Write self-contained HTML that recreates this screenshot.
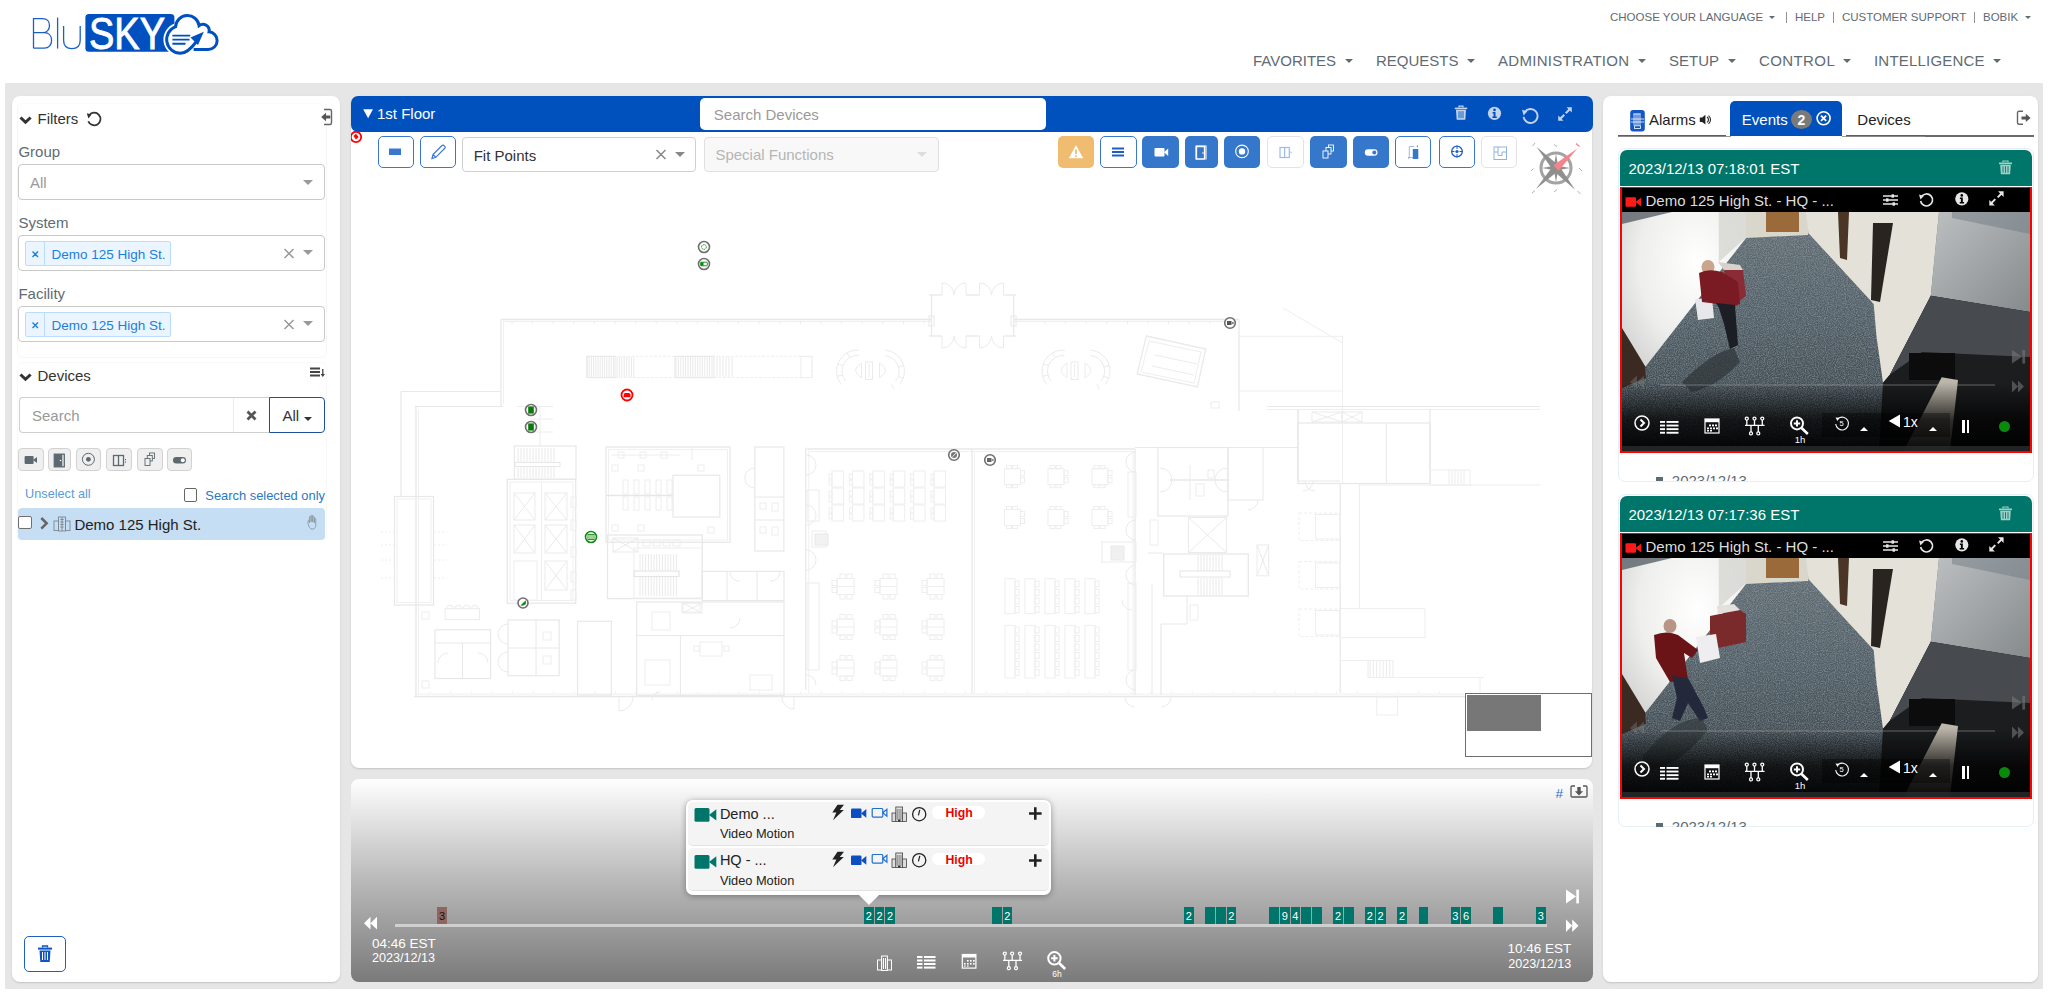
<!DOCTYPE html>
<html><head><meta charset="utf-8">
<style>
*{box-sizing:border-box;margin:0;padding:0}
html,body{width:2048px;height:994px;overflow:hidden;background:#fff;font-family:"Liberation Sans",sans-serif;position:relative;color:#333}
.a{position:absolute;white-space:nowrap}
svg.a{overflow:visible}
</style></head><body>

<svg class="a" style="left:0;top:0" width="230" height="60" viewBox="0 0 230 60">
 <g fill="none" stroke="#1b5fc6" stroke-width="1.3">
  <path d="M33.5 48.2V18.6h9.2c4.2 0 6.8 2.9 6.8 6.9s-2.6 7.2-6.8 7.2h-9.2 M42.7 32.7h1.6c4.6 0 7.3 3.2 7.3 7.6s-2.7 7.9-7.3 7.9h-10.8"/>
  <path d="M57.6 17.6v31"/>
  <path d="M63.6 26v14.3c0 5.3 3.1 8.3 8.3 8.3s8.3-3 8.3-8.3V26"/>
 </g>
 <rect x="85.4" y="14" width="89" height="37.7" rx="3.5" fill="#0050c0"/>
 <text x="89" y="49.2" font-family="Liberation Sans" font-size="45" fill="#fff" stroke="#fff" stroke-width="0.9" textLength="76" lengthAdjust="spacingAndGlyphs">SKY</text>
 <path d="M175.6 26.6A13.8 13.8 0 0 0 178 53.1" fill="none" stroke="#fff" stroke-width="6.5"/>
 <circle cx="180.5" cy="39.5" r="12.5" fill="#fff"/>
 <g fill="none" stroke="#0050c0" stroke-width="3">
  <path d="M193.6 49.4H208.3A8.8 8.8 0 0 0 209.05 31.83A6.2 6.2 0 0 0 199.09 25.69A11.8 11.8 0 0 0 175.62 26.59A13.8 13.8 0 0 0 180.5 53.3C186.5 53.3 192 47.5 196.5 41.5"/>
 </g>
 <path d="M203.8 31.7L190.5 37.5L198 44.9z" fill="#0050c0"/>
 <g stroke="#0050c0" stroke-width="1.9"><path d="M172.4 35.6H190.2M172.4 39.6H189.5M172.4 43.7H185.5"/></g>
</svg>
<div class="a" style="left:1610px;top:10.23px;font-size:11.5px;line-height:14.38px;color:#5f6b73;font-weight:400;">CHOOSE YOUR LANGUAGE</div>
<div class="a" style="left:1769px;top:16px;width:0;height:0;border-left:3.5px solid transparent;border-right:3.5px solid transparent;border-top:3.5px solid #5f6b73"></div>
<div class="a" style="left:1785.5px;top:12px;width:1px;height:11px;background:#8a9399"></div>
<div class="a" style="left:1795px;top:10.23px;font-size:11.5px;line-height:14.38px;color:#5f6b73;font-weight:400;">HELP</div>
<div class="a" style="left:1833px;top:12px;width:1px;height:11px;background:#8a9399"></div>
<div class="a" style="left:1842px;top:10.23px;font-size:11.5px;line-height:14.38px;color:#5f6b73;font-weight:400;">CUSTOMER SUPPORT</div>
<div class="a" style="left:1974px;top:12px;width:1px;height:11px;background:#8a9399"></div>
<div class="a" style="left:1983px;top:10.23px;font-size:11.5px;line-height:14.38px;color:#5f6b73;font-weight:400;">BOBIK</div>
<div class="a" style="left:2025px;top:16px;width:0;height:0;border-left:3.5px solid transparent;border-right:3.5px solid transparent;border-top:3.5px solid #5f6b73"></div>
<div class="a" style="left:1253px;top:52.13px;font-size:15px;line-height:18.75px;color:#5f6b73;font-weight:400;letter-spacing:0px">FAVORITES</div>
<div class="a" style="left:1345px;top:59px;width:0;height:0;border-left:4.0px solid transparent;border-right:4.0px solid transparent;border-top:4px solid #5f6b73"></div>
<div class="a" style="left:1376px;top:52.13px;font-size:15px;line-height:18.75px;color:#5f6b73;font-weight:400;letter-spacing:0px">REQUESTS</div>
<div class="a" style="left:1467px;top:59px;width:0;height:0;border-left:4.0px solid transparent;border-right:4.0px solid transparent;border-top:4px solid #5f6b73"></div>
<div class="a" style="left:1498px;top:52.13px;font-size:15px;line-height:18.75px;color:#5f6b73;font-weight:400;letter-spacing:0.3px">ADMINISTRATION</div>
<div class="a" style="left:1638px;top:59px;width:0;height:0;border-left:4.0px solid transparent;border-right:4.0px solid transparent;border-top:4px solid #5f6b73"></div>
<div class="a" style="left:1669px;top:52.13px;font-size:15px;line-height:18.75px;color:#5f6b73;font-weight:400;letter-spacing:0px">SETUP</div>
<div class="a" style="left:1728px;top:59px;width:0;height:0;border-left:4.0px solid transparent;border-right:4.0px solid transparent;border-top:4px solid #5f6b73"></div>
<div class="a" style="left:1759px;top:52.13px;font-size:15px;line-height:18.75px;color:#5f6b73;font-weight:400;letter-spacing:0.4px">CONTROL</div>
<div class="a" style="left:1843px;top:59px;width:0;height:0;border-left:4.0px solid transparent;border-right:4.0px solid transparent;border-top:4px solid #5f6b73"></div>
<div class="a" style="left:1874px;top:52.13px;font-size:15px;line-height:18.75px;color:#5f6b73;font-weight:400;letter-spacing:0.2px">INTELLIGENCE</div>
<div class="a" style="left:1993px;top:59px;width:0;height:0;border-left:4.0px solid transparent;border-right:4.0px solid transparent;border-top:4px solid #5f6b73"></div>
<div class="a" style="left:5px;top:83px;width:2038px;height:906px;background:#e6e6e6"></div>
<div class="a" style="left:12px;top:96px;width:328px;height:886px;background:#fff;border-radius:8px;box-shadow:0 1px 2px rgba(0,0,0,.15)"></div>
<div class="a" style="left:351px;top:96px;width:1241px;height:672px;background:#fff;border-radius:8px;box-shadow:0 1px 2px rgba(0,0,0,.15)"></div>
<div class="a" style="left:351px;top:779px;width:1241.5px;height:202.5px;border-radius:8px;background:linear-gradient(#fff 0%,#f6f6f6 6%,#b9b9b9 50%,#7a7a7a 100%)"></div>
<div class="a" style="left:1603px;top:96px;width:435px;height:886px;background:#fff;border-radius:8px;box-shadow:0 1px 2px rgba(0,0,0,.15)"></div>
<div class="a" style="left:17px;top:103px;width:310px;height:255px;border:1px solid #f6f6f6;border-top-color:#fbfbfb;border-radius:6px"></div>
<div class="a" style="left:17px;top:362px;width:310px;height:180px;border:1px solid #f8f8f8;border-radius:6px;border-bottom:none"></div>
<svg class="a" style="left:17px;top:112px;" width="18" height="14" viewBox="0 0 18 14"><polyline points="3.5,5.5 8.5,10.3 13.6,5.5" fill="none" stroke="#333" stroke-width="3"/></svg>
<div class="a" style="left:37.5px;top:110.03px;font-size:15px;line-height:18.75px;color:#333;font-weight:400;">Filters</div>
<svg class="a" style="left:85px;top:110px;" width="18" height="17" viewBox="0 0 18 17"><path d="M4.2 5.2A6.3 6.3 0 1 1 3.3 11.2" fill="none" stroke="#333" stroke-width="1.8"/><path d="M1.8 3.2L6.6 4.6L3.4 8.6z" fill="#333"/></svg>
<svg class="a" style="left:318px;top:106px;" width="18" height="20" viewBox="0 0 18 20"><path d="M6 3.5h6a1.5 1.5 0 0 1 1.5 1.5v12a1.5 1.5 0 0 1 -1.5 1.5h-6" fill="none" stroke="#666" stroke-width="1.4"/><path d="M3.2 11l4.8-4.2v2.7h4.3v3h-4.3v2.7z" fill="#555"/></svg>
<div class="a" style="left:18.4px;top:143.13px;font-size:15px;line-height:18.75px;color:#5f6b73;font-weight:400;">Group</div>
<div class="a" style="left:18px;top:164px;width:307px;height:36px;border:1px solid #c9c9c9;border-radius:4px;background:#fff"></div>
<div class="a" style="left:30px;top:173.93px;font-size:15px;line-height:18.75px;color:#9a9a9a;font-weight:400;">All</div>
<div class="a" style="left:303px;top:179.5px;width:0;height:0;border-left:5.0px solid transparent;border-right:5.0px solid transparent;border-top:5px solid #999"></div>
<div class="a" style="left:18.4px;top:214.03px;font-size:15px;line-height:18.75px;color:#5f6b73;font-weight:400;">System</div>
<div class="a" style="left:18px;top:235px;width:307px;height:36px;border:1px solid #c9c9c9;border-radius:4px;background:#fff"></div>
<div class="a" style="left:24.6px;top:241.4px;width:146px;height:24.6px;background:#ebf5ff;border:1px solid #b9dcff;border-radius:2px"></div>
<div class="a" style="left:44px;top:241.4px;width:1px;height:24.6px;background:#b9dcff"></div>
<svg class="a" style="left:30.5px;top:249.5px;" width="9" height="9" viewBox="0 0 9 9"><path d="M1.5 1.5L7 7M7 1.5L1.5 7" stroke="#1a7fe0" stroke-width="1.4"/></svg>
<div class="a" style="left:51.4px;top:246.58px;font-size:13.5px;line-height:16.88px;color:#1a7fe0;font-weight:400;">Demo 125 High St.</div>
<svg class="a" style="left:282.5px;top:247.5px;" width="12" height="11" viewBox="0 0 12 11"><path d="M1.5 1L10.5 10M10.5 1L1.5 10" stroke="#999" stroke-width="1.5"/></svg>
<div class="a" style="left:303px;top:250px;width:0;height:0;border-left:5.0px solid transparent;border-right:5.0px solid transparent;border-top:5px solid #999"></div>
<div class="a" style="left:18.4px;top:285.13px;font-size:15px;line-height:18.75px;color:#5f6b73;font-weight:400;">Facility</div>
<div class="a" style="left:18px;top:306px;width:307px;height:36px;border:1px solid #c9c9c9;border-radius:4px;background:#fff"></div>
<div class="a" style="left:24.6px;top:312.4px;width:146px;height:24.6px;background:#ebf5ff;border:1px solid #b9dcff;border-radius:2px"></div>
<div class="a" style="left:44px;top:312.4px;width:1px;height:24.6px;background:#b9dcff"></div>
<svg class="a" style="left:30.5px;top:320.5px;" width="9" height="9" viewBox="0 0 9 9"><path d="M1.5 1.5L7 7M7 1.5L1.5 7" stroke="#1a7fe0" stroke-width="1.4"/></svg>
<div class="a" style="left:51.4px;top:317.58px;font-size:13.5px;line-height:16.88px;color:#1a7fe0;font-weight:400;">Demo 125 High St.</div>
<svg class="a" style="left:282.5px;top:318.5px;" width="12" height="11" viewBox="0 0 12 11"><path d="M1.5 1L10.5 10M10.5 1L1.5 10" stroke="#999" stroke-width="1.5"/></svg>
<div class="a" style="left:303px;top:321px;width:0;height:0;border-left:5.0px solid transparent;border-right:5.0px solid transparent;border-top:5px solid #999"></div>
<svg class="a" style="left:17px;top:370px;" width="18" height="14" viewBox="0 0 18 14"><polyline points="3.5,4.5 8.5,9.3 13.6,4.5" fill="none" stroke="#333" stroke-width="3"/></svg>
<div class="a" style="left:37.5px;top:367.43px;font-size:15px;line-height:18.75px;color:#333;font-weight:400;">Devices</div>
<svg class="a" style="left:309px;top:366px;" width="18" height="13" viewBox="0 0 18 13"><path d="M1 2.5h10M1 6h10M1 9.5h10" stroke="#444" stroke-width="2"/><path d="M13.8 3v6" stroke="#444" stroke-width="1.3"/><path d="M11.6 8l2.2 3l2.2-3z" fill="#444"/></svg>
<div class="a" style="left:18.5px;top:397px;width:251px;height:36px;border:1px solid #cfcfcf;border-right:none;border-radius:4px 0 0 4px;background:#fff"></div>
<div class="a" style="left:233px;top:398px;width:1px;height:34px;background:#ececec"></div>
<div class="a" style="left:32px;top:407.33px;font-size:15px;line-height:18.75px;color:#999;font-weight:400;">Search</div>
<svg class="a" style="left:245px;top:409px;" width="13" height="13" viewBox="0 0 13 13"><path d="M2.5 2.5L10.5 10.5M10.5 2.5L2.5 10.5" stroke="#555" stroke-width="2.8"/></svg>
<div class="a" style="left:269px;top:397px;width:56px;height:36px;border:1px solid #1c4fa0;border-radius:0 4px 4px 0;background:#fff"></div>
<div class="a" style="left:282.4px;top:407.33px;font-size:15px;line-height:18.75px;color:#333;font-weight:400;">All</div>
<div class="a" style="left:303.5px;top:416.5px;width:0;height:0;border-left:4.0px solid transparent;border-right:4.0px solid transparent;border-top:4px solid #333"></div>
<div class="a" style="left:18.2px;top:448.2px;width:25.4px;height:23.3px;background:#efefef;border:1px solid #d2d2d2;border-radius:4px"></div>
<div class="a" style="left:48.2px;top:448.2px;width:22.7px;height:23.3px;background:#efefef;border:1px solid #d2d2d2;border-radius:4px"></div>
<div class="a" style="left:76.2px;top:448.2px;width:24.6px;height:23.3px;background:#efefef;border:1px solid #d2d2d2;border-radius:4px"></div>
<div class="a" style="left:106.1px;top:448.2px;width:26.4px;height:23.3px;background:#efefef;border:1px solid #d2d2d2;border-radius:4px"></div>
<div class="a" style="left:137.3px;top:448.2px;width:25.3px;height:23.3px;background:#efefef;border:1px solid #d2d2d2;border-radius:4px"></div>
<div class="a" style="left:167.2px;top:448.2px;width:25.0px;height:23.3px;background:#efefef;border:1px solid #d2d2d2;border-radius:4px"></div>
<svg class="a" style="left:24px;top:454px;" width="14" height="12" viewBox="0 0 14 12"><rect x="0.6" y="2" width="9" height="8" rx="1" fill="#5d6970"/><path d="M9 6l4-3v6z" fill="#5d6970"/></svg>
<svg class="a" style="left:53px;top:453px;" width="13" height="15" viewBox="0 0 13 15"><rect x="1.3" y="1.2" width="10" height="12.6" fill="none" stroke="#5d6970" stroke-width="1.3"/><rect x="1.3" y="1.2" width="8" height="12.6" fill="#5d6970"/><circle cx="7.5" cy="7.5" r="0.8" fill="#fff"/></svg>
<svg class="a" style="left:81px;top:452px;" width="15" height="15" viewBox="0 0 15 15"><circle cx="7.4" cy="7.3" r="6" fill="none" stroke="#5d6970" stroke-width="1"/><circle cx="7.4" cy="7.3" r="2.4" fill="#5d6970"/></svg>
<svg class="a" style="left:112px;top:454px;" width="16" height="13" viewBox="0 0 16 13"><rect x="1.5" y="1.5" width="10" height="10" fill="none" stroke="#5d6970" stroke-width="1.3"/><path d="M6.5 1.5v10" stroke="#5d6970" stroke-width="1.3"/><path d="M13.5 5v1.2M13.5 7.5v1.2" stroke="#5d6970" stroke-width="1"/></svg>
<svg class="a" style="left:144px;top:452px;" width="12" height="15" viewBox="0 0 12 15"><g fill="#efefef" stroke="#5d6970" stroke-width="0.9"><rect x="5.5" y="1" width="5" height="5.5"/><rect x="3.3" y="3.5" width="5" height="5.5"/><rect x="1" y="6.5" width="5" height="7"/></g></svg>
<svg class="a" style="left:172px;top:456px;" width="15" height="9" viewBox="0 0 15 9"><rect x="1" y="1" width="13" height="6.5" rx="3.25" fill="#5d6970"/><circle cx="10.8" cy="4.25" r="2" fill="#fff"/></svg>
<div class="a" style="left:25.1px;top:486.96px;font-size:12.7px;line-height:15.88px;color:#5b9bd5;font-weight:400;">Unselect all</div>
<div class="a" style="left:183.5px;top:488.4px;width:13.4px;height:13.2px;border:1px solid #666;border-radius:2px;background:#fff"></div>
<div class="a" style="left:205.3px;top:487.77px;font-size:12.9px;line-height:16.12px;color:#2a77c6;font-weight:400;">Search selected only</div>
<div class="a" style="left:18.1px;top:508.1px;width:307px;height:31.5px;background:#c5def3;border-radius:4px"></div>
<div class="a" style="left:18.2px;top:516px;width:13.7px;height:13px;border:1px solid #6f6f6f;border-radius:2px;background:#fff"></div>
<svg class="a" style="left:38px;top:515px;" width="13" height="16" viewBox="0 0 13 16"><polyline points="3.3,3 8.6,8.3 3.3,13.6" fill="none" stroke="#666" stroke-width="2.6"/></svg>
<svg class="a" style="left:53px;top:516px;" width="18" height="16" viewBox="0 0 18 16"><g fill="none" stroke="#7a8790" stroke-width="0.9"><rect x="5.5" y="1" width="7" height="14"/><rect x="1" y="5" width="4.5" height="9.5"/><rect x="12.5" y="5" width="4.5" height="9.5"/><path d="M7.3 3.5h3.4M7.3 6h3.4M7.3 8.5h3.4M7.3 11h3.4M9 1v14"/></g></svg>
<div class="a" style="left:74.4px;top:515.73px;font-size:15px;line-height:18.75px;color:#222;font-weight:400;">Demo 125 High St.</div>
<svg class="a" style="left:307px;top:514px;" width="15" height="18" viewBox="0 0 15 18"><path d="M4 15c-2-2-3-4-3-6V7c0-1 1.5-1 1.5 0v2V3c0-1 1.6-1 1.6 0v5V2c0-1 1.6-1 1.6 0v6V3c0-1 1.6-1 1.6 0v6V5c0-1 1.5-1 1.5 0v6c0 2-1 4-2.5 4z" fill="none" stroke="#8d979e" stroke-width="0.9"/></svg>
<div class="a" style="left:23.6px;top:936.3px;width:42.2px;height:36.2px;border:1.5px solid #1f5fc4;border-radius:5px;background:#fff"></div>
<svg class="a" style="left:37px;top:945px;" width="16" height="18" viewBox="0 0 16 18"><path d="M5.5 2.5V1h5v1.5" fill="none" stroke="#0d54c4" stroke-width="1.3"/><rect x="1" y="2.6" width="14" height="2" fill="#0d54c4"/><path d="M2.5 5.5h11l-0.8 11.5h-9.4z" fill="#0d54c4"/><path d="M5.5 7v8M8 7v8M10.5 7v8" stroke="#fff" stroke-width="1"/></svg>
<div class="a" style="left:351px;top:96px;width:1241.5px;height:35.8px;background:#0051be;border-radius:7px"></div>
<svg class="a" style="left:362px;top:108px;" width="12" height="11" viewBox="0 0 12 11"><path d="M1.2 1.2H11L6.1 10.2z" fill="#fff"/></svg>
<div class="a" style="left:377px;top:105.13px;font-size:15px;line-height:18.75px;color:#fff;font-weight:400;">1st Floor</div>
<div class="a" style="left:700px;top:98px;width:345.5px;height:31.5px;background:#fff;border-radius:5px"></div>
<div class="a" style="left:713.8px;top:105.93px;font-size:15px;line-height:18.75px;color:#9a9a9a;font-weight:400;">Search Devices</div>
<svg class="a" style="left:1453px;top:105px;" width="16" height="16" viewBox="0 0 16 16"><path d="M6 2.4V1.2h4v1.2" fill="none" stroke="#c3d3ec" stroke-width="1.2"/><rect x="1.8" y="2.6" width="12.4" height="1.6" fill="#c3d3ec"/><path d="M3 4.8h10l-0.7 10h-8.6z" fill="#c3d3ec"/><path d="M6 6.2v7M8 6.2v7M10 6.2v7" stroke="#0051be" stroke-width="0.9"/></svg>
<svg class="a" style="left:1487px;top:106px;" width="16" height="16" viewBox="0 0 16 16"><circle cx="7.5" cy="7.3" r="6.6" fill="#c3d3ec"/><circle cx="7.5" cy="3.9" r="1.3" fill="#0051be"/><path d="M5.6 6h2.9v4.6h1.3v1.4h-4.4v-1.4h1.2v-3.2h-1z" fill="#0051be"/></svg>
<svg class="a" style="left:1521px;top:106px;" width="18" height="18" viewBox="0 0 18 18"><path d="M3.6 6.3A7 7 0 1 1 2.6 10.8" fill="none" stroke="#c3d3ec" stroke-width="1.9"/><path d="M1 3.8L6.4 5.3L2.6 9.4z" fill="#c3d3ec"/></svg>
<svg class="a" style="left:1557px;top:106px;" width="16" height="16" viewBox="0 0 16 16"><path d="M3 13l4.3-4.3M8.7 7.3L13 3" stroke="#c3d3ec" stroke-width="2"/><path d="M1.2 9.5V14.8H6.5z M9.5 1.2H14.8V6.5z" fill="#c3d3ec"/></svg>
<svg class="a" style="left:351px;top:132px" width="1241" height="636" viewBox="351 132 1241 636"><g><path d="M501 319.5 L931 319.5" stroke="#e8e8e8" stroke-width="1.3" fill="none"/><path d="M503 321.5 L931 321.5" stroke="#f0f0f0" stroke-width="1" fill="none"/><path d="M1014 319.5 L1239 319.5" stroke="#e8e8e8" stroke-width="1.3" fill="none"/><path d="M1014 321.5 L1237 321.5" stroke="#f0f0f0" stroke-width="1" fill="none"/><path d="M512.0 321 L512.0 324" stroke="#ececec" stroke-width="1" fill="none"/><path d="M532.6 321 L532.6 324" stroke="#ececec" stroke-width="1" fill="none"/><path d="M553.2 321 L553.2 324" stroke="#ececec" stroke-width="1" fill="none"/><path d="M573.8 321 L573.8 324" stroke="#ececec" stroke-width="1" fill="none"/><path d="M594.4 321 L594.4 324" stroke="#ececec" stroke-width="1" fill="none"/><path d="M615.0 321 L615.0 324" stroke="#ececec" stroke-width="1" fill="none"/><path d="M635.6 321 L635.6 324" stroke="#ececec" stroke-width="1" fill="none"/><path d="M656.2 321 L656.2 324" stroke="#ececec" stroke-width="1" fill="none"/><path d="M676.8 321 L676.8 324" stroke="#ececec" stroke-width="1" fill="none"/><path d="M697.4 321 L697.4 324" stroke="#ececec" stroke-width="1" fill="none"/><path d="M718.0 321 L718.0 324" stroke="#ececec" stroke-width="1" fill="none"/><path d="M738.6 321 L738.6 324" stroke="#ececec" stroke-width="1" fill="none"/><path d="M759.2 321 L759.2 324" stroke="#ececec" stroke-width="1" fill="none"/><path d="M779.8 321 L779.8 324" stroke="#ececec" stroke-width="1" fill="none"/><path d="M800.4000000000001 321 L800.4000000000001 324" stroke="#ececec" stroke-width="1" fill="none"/><path d="M821.0 321 L821.0 324" stroke="#ececec" stroke-width="1" fill="none"/><path d="M841.6 321 L841.6 324" stroke="#ececec" stroke-width="1" fill="none"/><path d="M862.2 321 L862.2 324" stroke="#ececec" stroke-width="1" fill="none"/><path d="M882.8 321 L882.8 324" stroke="#ececec" stroke-width="1" fill="none"/><path d="M903.4000000000001 321 L903.4000000000001 324" stroke="#ececec" stroke-width="1" fill="none"/><path d="M924.0 321 L924.0 324" stroke="#ececec" stroke-width="1" fill="none"/><path d="M1045.0 321 L1045.0 324" stroke="#ececec" stroke-width="1" fill="none"/><path d="M1065.6 321 L1065.6 324" stroke="#ececec" stroke-width="1" fill="none"/><path d="M1086.2 321 L1086.2 324" stroke="#ececec" stroke-width="1" fill="none"/><path d="M1106.8 321 L1106.8 324" stroke="#ececec" stroke-width="1" fill="none"/><path d="M1127.4 321 L1127.4 324" stroke="#ececec" stroke-width="1" fill="none"/><path d="M1148.0 321 L1148.0 324" stroke="#ececec" stroke-width="1" fill="none"/><path d="M1168.6 321 L1168.6 324" stroke="#ececec" stroke-width="1" fill="none"/><path d="M1189.2 321 L1189.2 324" stroke="#ececec" stroke-width="1" fill="none"/><path d="M1209.8 321 L1209.8 324" stroke="#ececec" stroke-width="1" fill="none"/><path d="M1230.4 321 L1230.4 324" stroke="#ececec" stroke-width="1" fill="none"/><path d="M501 319.5 L501 406.5" stroke="#e8e8e8" stroke-width="1.3" fill="none"/><path d="M503.5 321.5 L503.5 404" stroke="#f0f0f0" stroke-width="1" fill="none"/><path d="M401 391.5 L501 391.5" stroke="#e8e8e8" stroke-width="1.2" fill="none"/><path d="M415 406.5 L503 406.5" stroke="#e8e8e8" stroke-width="1.2" fill="none"/><path d="M401 391.5 L401 496" stroke="#e8e8e8" stroke-width="1.2" fill="none"/><path d="M416 406.5 L416 696.5" stroke="#e8e8e8" stroke-width="1.3" fill="none"/><path d="M418.5 409 L418.5 694" stroke="#f0f0f0" stroke-width="1" fill="none"/><rect x="394.5" y="496.5" width="39.0" height="108.5" stroke="#e8e8e8" stroke-width="1.2" fill="none"/><rect x="397" y="499" width="34" height="103.5" stroke="#f0f0f0" stroke-width="1" fill="none"/><path d="M381 532 L394 532" stroke="#eeeeee" stroke-width="1" fill="none" stroke-dasharray="2 2"/><path d="M434 532 L447 532" stroke="#eeeeee" stroke-width="1" fill="none" stroke-dasharray="2 2"/><path d="M381 545 L394 545" stroke="#eeeeee" stroke-width="1" fill="none" stroke-dasharray="2 2"/><path d="M434 545 L447 545" stroke="#eeeeee" stroke-width="1" fill="none" stroke-dasharray="2 2"/><path d="M381 560 L394 560" stroke="#eeeeee" stroke-width="1" fill="none" stroke-dasharray="2 2"/><path d="M434 560 L447 560" stroke="#eeeeee" stroke-width="1" fill="none" stroke-dasharray="2 2"/><path d="M381 578 L394 578" stroke="#eeeeee" stroke-width="1" fill="none" stroke-dasharray="2 2"/><path d="M434 578 L447 578" stroke="#eeeeee" stroke-width="1" fill="none" stroke-dasharray="2 2"/><path d="M414 696.5 L1466 696.5" stroke="#e8e8e8" stroke-width="1.4" fill="none"/><path d="M416 694 L1464 694" stroke="#f0f0f0" stroke-width="1" fill="none"/><path d="M430.0 694 L430.0 691.5" stroke="#f0f0f0" stroke-width="1" fill="none"/><path d="M450.6 694 L450.6 691.5" stroke="#f0f0f0" stroke-width="1" fill="none"/><path d="M471.2 694 L471.2 691.5" stroke="#f0f0f0" stroke-width="1" fill="none"/><path d="M491.8 694 L491.8 691.5" stroke="#f0f0f0" stroke-width="1" fill="none"/><path d="M512.4 694 L512.4 691.5" stroke="#f0f0f0" stroke-width="1" fill="none"/><path d="M533.0 694 L533.0 691.5" stroke="#f0f0f0" stroke-width="1" fill="none"/><path d="M553.6 694 L553.6 691.5" stroke="#f0f0f0" stroke-width="1" fill="none"/><path d="M574.2 694 L574.2 691.5" stroke="#f0f0f0" stroke-width="1" fill="none"/><path d="M594.8 694 L594.8 691.5" stroke="#f0f0f0" stroke-width="1" fill="none"/><path d="M615.4 694 L615.4 691.5" stroke="#f0f0f0" stroke-width="1" fill="none"/><path d="M636.0 694 L636.0 691.5" stroke="#f0f0f0" stroke-width="1" fill="none"/><path d="M656.6 694 L656.6 691.5" stroke="#f0f0f0" stroke-width="1" fill="none"/><path d="M677.2 694 L677.2 691.5" stroke="#f0f0f0" stroke-width="1" fill="none"/><path d="M697.8 694 L697.8 691.5" stroke="#f0f0f0" stroke-width="1" fill="none"/><path d="M718.4000000000001 694 L718.4000000000001 691.5" stroke="#f0f0f0" stroke-width="1" fill="none"/><path d="M739.0 694 L739.0 691.5" stroke="#f0f0f0" stroke-width="1" fill="none"/><path d="M759.6 694 L759.6 691.5" stroke="#f0f0f0" stroke-width="1" fill="none"/><path d="M780.2 694 L780.2 691.5" stroke="#f0f0f0" stroke-width="1" fill="none"/><path d="M800.8 694 L800.8 691.5" stroke="#f0f0f0" stroke-width="1" fill="none"/><path d="M821.4000000000001 694 L821.4000000000001 691.5" stroke="#f0f0f0" stroke-width="1" fill="none"/><path d="M842.0 694 L842.0 691.5" stroke="#f0f0f0" stroke-width="1" fill="none"/><path d="M862.6 694 L862.6 691.5" stroke="#f0f0f0" stroke-width="1" fill="none"/><path d="M883.2 694 L883.2 691.5" stroke="#f0f0f0" stroke-width="1" fill="none"/><path d="M903.8 694 L903.8 691.5" stroke="#f0f0f0" stroke-width="1" fill="none"/><path d="M924.4000000000001 694 L924.4000000000001 691.5" stroke="#f0f0f0" stroke-width="1" fill="none"/><path d="M945.0 694 L945.0 691.5" stroke="#f0f0f0" stroke-width="1" fill="none"/><path d="M965.6 694 L965.6 691.5" stroke="#f0f0f0" stroke-width="1" fill="none"/><path d="M986.2 694 L986.2 691.5" stroke="#f0f0f0" stroke-width="1" fill="none"/><path d="M1006.8000000000001 694 L1006.8000000000001 691.5" stroke="#f0f0f0" stroke-width="1" fill="none"/><path d="M1027.4 694 L1027.4 691.5" stroke="#f0f0f0" stroke-width="1" fill="none"/><path d="M1048.0 694 L1048.0 691.5" stroke="#f0f0f0" stroke-width="1" fill="none"/><path d="M1068.6 694 L1068.6 691.5" stroke="#f0f0f0" stroke-width="1" fill="none"/><path d="M1089.2 694 L1089.2 691.5" stroke="#f0f0f0" stroke-width="1" fill="none"/><path d="M1109.8000000000002 694 L1109.8000000000002 691.5" stroke="#f0f0f0" stroke-width="1" fill="none"/><path d="M1130.4 694 L1130.4 691.5" stroke="#f0f0f0" stroke-width="1" fill="none"/><path d="M1151.0 694 L1151.0 691.5" stroke="#f0f0f0" stroke-width="1" fill="none"/><path d="M1171.6 694 L1171.6 691.5" stroke="#f0f0f0" stroke-width="1" fill="none"/><path d="M1192.2 694 L1192.2 691.5" stroke="#f0f0f0" stroke-width="1" fill="none"/><path d="M1212.8000000000002 694 L1212.8000000000002 691.5" stroke="#f0f0f0" stroke-width="1" fill="none"/><path d="M1233.4 694 L1233.4 691.5" stroke="#f0f0f0" stroke-width="1" fill="none"/><path d="M1254.0 694 L1254.0 691.5" stroke="#f0f0f0" stroke-width="1" fill="none"/><path d="M1274.6 694 L1274.6 691.5" stroke="#f0f0f0" stroke-width="1" fill="none"/><path d="M1295.2 694 L1295.2 691.5" stroke="#f0f0f0" stroke-width="1" fill="none"/><path d="M1315.8000000000002 694 L1315.8000000000002 691.5" stroke="#f0f0f0" stroke-width="1" fill="none"/><path d="M1336.4 694 L1336.4 691.5" stroke="#f0f0f0" stroke-width="1" fill="none"/><path d="M1357.0 694 L1357.0 691.5" stroke="#f0f0f0" stroke-width="1" fill="none"/><path d="M1377.6 694 L1377.6 691.5" stroke="#f0f0f0" stroke-width="1" fill="none"/><path d="M1398.2 694 L1398.2 691.5" stroke="#f0f0f0" stroke-width="1" fill="none"/><path d="M1418.8000000000002 694 L1418.8000000000002 691.5" stroke="#f0f0f0" stroke-width="1" fill="none"/><path d="M1439.4 694 L1439.4 691.5" stroke="#f0f0f0" stroke-width="1" fill="none"/><path d="M931.5 295 L931.5 336" stroke="#e8e8e8" stroke-width="1.2" fill="none"/><path d="M1013.7 295 L1013.7 336" stroke="#e8e8e8" stroke-width="1.2" fill="none"/><path d="M929 295 L942 295" stroke="#e8e8e8" stroke-width="1.3" fill="none"/><path d="M966 295 L979.5 295" stroke="#e8e8e8" stroke-width="1.3" fill="none"/><path d="M1003.5 295 L1016 295" stroke="#e8e8e8" stroke-width="1.3" fill="none"/><path d="M929 336 L942 336" stroke="#e8e8e8" stroke-width="1.3" fill="none"/><path d="M966 336 L979.5 336" stroke="#e8e8e8" stroke-width="1.3" fill="none"/><path d="M1003.5 336 L1016 336" stroke="#e8e8e8" stroke-width="1.3" fill="none"/><rect x="929" y="316" width="5" height="10" stroke="#e8e8e8" stroke-width="1" fill="none"/><rect x="1011" y="316" width="5" height="10" stroke="#e8e8e8" stroke-width="1" fill="none"/><path d="M942.0 283.0A12 12 0 0 1 954.0 295.0" stroke="#ebebeb" stroke-width="1" fill="none"/><path d="M954.0 295.0A12 12 0 0 1 966.0 283.0" stroke="#ebebeb" stroke-width="1" fill="none"/><path d="M942 295 L942 283" stroke="#ebebeb" stroke-width="1" fill="none"/><path d="M966 295 L966 283" stroke="#ebebeb" stroke-width="1" fill="none"/><path d="M954.0 336.0A12 12 0 0 1 942.0 348.0" stroke="#ebebeb" stroke-width="1" fill="none"/><path d="M966.0 348.0A12 12 0 0 1 954.0 336.0" stroke="#ebebeb" stroke-width="1" fill="none"/><path d="M942 336 L942 348" stroke="#ebebeb" stroke-width="1" fill="none"/><path d="M966 336 L966 348" stroke="#ebebeb" stroke-width="1" fill="none"/><path d="M979.5 283.0A12 12 0 0 1 991.5 295.0" stroke="#ebebeb" stroke-width="1" fill="none"/><path d="M991.5 295.0A12 12 0 0 1 1003.5 283.0" stroke="#ebebeb" stroke-width="1" fill="none"/><path d="M979.5 295 L979.5 283" stroke="#ebebeb" stroke-width="1" fill="none"/><path d="M1003.5 295 L1003.5 283" stroke="#ebebeb" stroke-width="1" fill="none"/><path d="M991.5 336.0A12 12 0 0 1 979.5 348.0" stroke="#ebebeb" stroke-width="1" fill="none"/><path d="M1003.5 348.0A12 12 0 0 1 991.5 336.0" stroke="#ebebeb" stroke-width="1" fill="none"/><path d="M979.5 336 L979.5 348" stroke="#ebebeb" stroke-width="1" fill="none"/><path d="M1003.5 336 L1003.5 348" stroke="#ebebeb" stroke-width="1" fill="none"/><path d="M1239 319.5 L1239 411" stroke="#e8e8e8" stroke-width="1.2" fill="none"/><rect x="1239" y="336.3" width="103.5" height="54.7" stroke="#eeeeee" stroke-width="1" fill="none"/><path d="M1283 308 L1342.5 343" stroke="#eeeeee" stroke-width="1" fill="none"/><path d="M1342.5 343 L1342.5 423" stroke="#eeeeee" stroke-width="1" fill="none"/><path d="M1267 406.5 L1540 406.5" stroke="#e8e8e8" stroke-width="1.2" fill="none"/><path d="M1267 409.5 L1540 409.5" stroke="#eeeeee" stroke-width="1" fill="none"/><rect x="1298" y="423" width="132" height="60.5" stroke="#e8e8e8" stroke-width="1.2" fill="none"/><path d="M1298 423 L1298 409.5" stroke="#eeeeee" stroke-width="1" fill="none"/><path d="M1342.4 423 L1342.4 483" stroke="#eeeeee" stroke-width="1" fill="none"/><path d="M1386.4 423 L1386.4 483" stroke="#e8e8e8" stroke-width="1" fill="none"/><rect x="1312" y="412" width="30" height="10" stroke="#ebebeb" stroke-width="1" fill="none"/><path d="M1312 412 L1342 422" stroke="#ebebeb" stroke-width="1" fill="none"/><path d="M1342 412 L1312 422" stroke="#ebebeb" stroke-width="1" fill="none"/><rect x="1342" y="412" width="20" height="10" stroke="#ebebeb" stroke-width="1" fill="none"/><path d="M1342 412 L1362 422" stroke="#ebebeb" stroke-width="1" fill="none"/><path d="M1362 412 L1342 422" stroke="#ebebeb" stroke-width="1" fill="none"/><path d="M1430 409.5 L1430 483.5" stroke="#e8e8e8" stroke-width="1.2" fill="none"/><path d="M1358 485 L1540 485" stroke="#eeeeee" stroke-width="1" fill="none"/><rect x="1430" y="470" width="40" height="15" stroke="#eeeeee" stroke-width="1" fill="none"/><path d="M1449 470 L1449 485" stroke="#ececec" stroke-width="1" fill="none"/><path d="M1452 470 L1452 485" stroke="#ececec" stroke-width="1" fill="none"/><path d="M1455 470 L1455 485" stroke="#ececec" stroke-width="1" fill="none"/><path d="M1458 470 L1458 485" stroke="#ececec" stroke-width="1" fill="none"/><path d="M1461 470 L1461 485" stroke="#ececec" stroke-width="1" fill="none"/><path d="M1464 470 L1464 485" stroke="#ececec" stroke-width="1" fill="none"/><path d="M1340.2 484 L1340.2 693" stroke="#e8e8e8" stroke-width="1.3" fill="none"/><path d="M1359.4 485 L1359.4 609" stroke="#eeeeee" stroke-width="1" fill="none"/><rect x="1340" y="608.6" width="85" height="29.0" stroke="#eeeeee" stroke-width="1" fill="none"/><rect x="1299" y="513" width="41" height="27.5" stroke="#eeeeee" stroke-width="1" fill="none" stroke-dasharray="3 2"/><rect x="1315.5" y="514.5" width="24.5" height="24.5" stroke="#eeeeee" stroke-width="1" fill="none"/><rect x="1299" y="561.5" width="41" height="27.5" stroke="#eeeeee" stroke-width="1" fill="none" stroke-dasharray="3 2"/><rect x="1315.5" y="563.0" width="24.5" height="24.5" stroke="#eeeeee" stroke-width="1" fill="none"/><rect x="1299" y="609" width="41" height="27.5" stroke="#eeeeee" stroke-width="1" fill="none" stroke-dasharray="3 2"/><rect x="1315.5" y="610.5" width="24.5" height="24.5" stroke="#eeeeee" stroke-width="1" fill="none"/><rect x="1368" y="660.5" width="25" height="17.0" stroke="#ececec" stroke-width="1" fill="none"/><path d="M1370.0 661 L1370.0 677" stroke="#ececec" stroke-width="1" fill="none"/><path d="M1373.3 661 L1373.3 677" stroke="#ececec" stroke-width="1" fill="none"/><path d="M1376.6 661 L1376.6 677" stroke="#ececec" stroke-width="1" fill="none"/><path d="M1379.9 661 L1379.9 677" stroke="#ececec" stroke-width="1" fill="none"/><path d="M1383.2 661 L1383.2 677" stroke="#ececec" stroke-width="1" fill="none"/><path d="M1386.5 661 L1386.5 677" stroke="#ececec" stroke-width="1" fill="none"/><path d="M1389.8 661 L1389.8 677" stroke="#ececec" stroke-width="1" fill="none"/><path d="M1340 660.5 L1393 660.5" stroke="#eeeeee" stroke-width="1" fill="none"/><path d="M1368 677.5 L1484 677.5" stroke="#eeeeee" stroke-width="1" fill="none"/><path d="M1480 677.5 L1480 696" stroke="#eeeeee" stroke-width="1" fill="none"/><rect x="1376.7" y="697" width="20.8" height="18" stroke="#eeeeee" stroke-width="1" fill="none"/><path d="M633.0 697.0A14 14 0 0 1 619.0 711.0" stroke="#ebebeb" stroke-width="1" fill="none"/><path d="M619 697 L619 711" stroke="#ebebeb" stroke-width="1" fill="none"/><path d="M794.0 709.0A12 12 0 0 1 782.0 697.0" stroke="#ebebeb" stroke-width="1" fill="none"/><path d="M794 697 L794 709" stroke="#ebebeb" stroke-width="1" fill="none"/><path d="M1135.0 707.0A10 10 0 0 1 1125.0 697.0" stroke="#ebebeb" stroke-width="1" fill="none"/><path d="M1171.0 697.0A10 10 0 0 1 1161.0 707.0" stroke="#ebebeb" stroke-width="1" fill="none"/><rect x="586.5" y="356.3" width="225.5" height="21.3" stroke="#eeeeee" stroke-width="1" fill="none" stroke-dasharray="3 1.5"/><path d="M587 357 L587 377" stroke="#eaeaea" stroke-width="1" fill="none"/><path d="M589.2 357 L589.2 377" stroke="#eaeaea" stroke-width="1" fill="none"/><path d="M591.4000000000001 357 L591.4000000000001 377" stroke="#eaeaea" stroke-width="1" fill="none"/><path d="M593.6000000000001 357 L593.6000000000001 377" stroke="#eaeaea" stroke-width="1" fill="none"/><path d="M595.8000000000002 357 L595.8000000000002 377" stroke="#eaeaea" stroke-width="1" fill="none"/><path d="M598.0000000000002 357 L598.0000000000002 377" stroke="#eaeaea" stroke-width="1" fill="none"/><path d="M600.2000000000003 357 L600.2000000000003 377" stroke="#eaeaea" stroke-width="1" fill="none"/><path d="M602.4000000000003 357 L602.4000000000003 377" stroke="#eaeaea" stroke-width="1" fill="none"/><path d="M604.6000000000004 357 L604.6000000000004 377" stroke="#eaeaea" stroke-width="1" fill="none"/><path d="M606.8000000000004 357 L606.8000000000004 377" stroke="#eaeaea" stroke-width="1" fill="none"/><path d="M609.0000000000005 357 L609.0000000000005 377" stroke="#eaeaea" stroke-width="1" fill="none"/><path d="M611.2000000000005 357 L611.2000000000005 377" stroke="#eaeaea" stroke-width="1" fill="none"/><path d="M613.4000000000005 357 L613.4000000000005 377" stroke="#eaeaea" stroke-width="1" fill="none"/><path d="M617 357 L617 377" stroke="#eaeaea" stroke-width="1" fill="none"/><path d="M619.4 357 L619.4 377" stroke="#eaeaea" stroke-width="1" fill="none"/><path d="M621.8 357 L621.8 377" stroke="#eaeaea" stroke-width="1" fill="none"/><path d="M624.1999999999999 357 L624.1999999999999 377" stroke="#eaeaea" stroke-width="1" fill="none"/><path d="M626.5999999999999 357 L626.5999999999999 377" stroke="#eaeaea" stroke-width="1" fill="none"/><path d="M628.9999999999999 357 L628.9999999999999 377" stroke="#eaeaea" stroke-width="1" fill="none"/><path d="M631.3999999999999 357 L631.3999999999999 377" stroke="#eaeaea" stroke-width="1" fill="none"/><path d="M633.7999999999998 357 L633.7999999999998 377" stroke="#eaeaea" stroke-width="1" fill="none"/><path d="M676 357 L676 377" stroke="#eaeaea" stroke-width="1" fill="none"/><path d="M678.4 357 L678.4 377" stroke="#eaeaea" stroke-width="1" fill="none"/><path d="M680.8 357 L680.8 377" stroke="#eaeaea" stroke-width="1" fill="none"/><path d="M683.1999999999999 357 L683.1999999999999 377" stroke="#eaeaea" stroke-width="1" fill="none"/><path d="M685.5999999999999 357 L685.5999999999999 377" stroke="#eaeaea" stroke-width="1" fill="none"/><path d="M687.9999999999999 357 L687.9999999999999 377" stroke="#eaeaea" stroke-width="1" fill="none"/><path d="M690.3999999999999 357 L690.3999999999999 377" stroke="#eaeaea" stroke-width="1" fill="none"/><path d="M692.7999999999998 357 L692.7999999999998 377" stroke="#eaeaea" stroke-width="1" fill="none"/><path d="M695.1999999999998 357 L695.1999999999998 377" stroke="#eaeaea" stroke-width="1" fill="none"/><path d="M697.5999999999998 357 L697.5999999999998 377" stroke="#eaeaea" stroke-width="1" fill="none"/><path d="M699.9999999999998 357 L699.9999999999998 377" stroke="#eaeaea" stroke-width="1" fill="none"/><path d="M702.3999999999997 357 L702.3999999999997 377" stroke="#eaeaea" stroke-width="1" fill="none"/><path d="M704.7999999999997 357 L704.7999999999997 377" stroke="#eaeaea" stroke-width="1" fill="none"/><path d="M707.1999999999997 357 L707.1999999999997 377" stroke="#eaeaea" stroke-width="1" fill="none"/><path d="M709.5999999999997 357 L709.5999999999997 377" stroke="#eaeaea" stroke-width="1" fill="none"/><path d="M711.9999999999997 357 L711.9999999999997 377" stroke="#eaeaea" stroke-width="1" fill="none"/><path d="M717 357 L717 377" stroke="#eaeaea" stroke-width="1" fill="none"/><path d="M720 357 L720 377" stroke="#eaeaea" stroke-width="1" fill="none"/><path d="M723 357 L723 377" stroke="#eaeaea" stroke-width="1" fill="none"/><path d="M726 357 L726 377" stroke="#eaeaea" stroke-width="1" fill="none"/><path d="M729 357 L729 377" stroke="#eaeaea" stroke-width="1" fill="none"/><path d="M732 357 L732 377" stroke="#eaeaea" stroke-width="1" fill="none"/><rect x="587" y="356.3" width="28" height="21.3" stroke="#e8e8e8" stroke-width="1" fill="none"/><rect x="675" y="356.3" width="39" height="21.3" stroke="#e8e8e8" stroke-width="1" fill="none"/><rect x="801" y="356.3" width="11" height="21.3" stroke="#eeeeee" stroke-width="1" fill="none"/><path d="M841.4 384.5A21 21 0 0 1 859.3 350.1" stroke="#ebebeb" stroke-width="1" fill="none"/><path d="M845.6 381.0A15.5 15.5 0 0 1 858.9 355.6" stroke="#ebebeb" stroke-width="1" fill="none"/><path d="M885.3 350.1A21 21 0 0 1 899.6 384.5" stroke="#ebebeb" stroke-width="1" fill="none"/><path d="M884.9 355.6A15.5 15.5 0 0 1 895.4 381.0" stroke="#ebebeb" stroke-width="1" fill="none"/><path d="M842.5 375.0 L837.2 376.4" stroke="#ebebeb" stroke-width="1" fill="none"/><path d="M898.5 367.0 L903.8 365.6" stroke="#ebebeb" stroke-width="1" fill="none"/><path d="M842.9 365.7 L837.8 363.8" stroke="#ebebeb" stroke-width="1" fill="none"/><path d="M898.1 376.3 L903.2 378.2" stroke="#ebebeb" stroke-width="1" fill="none"/><path d="M849.8 357.6 L847.0 352.8" stroke="#ebebeb" stroke-width="1" fill="none"/><path d="M891.2 384.4 L894.0 389.2" stroke="#ebebeb" stroke-width="1" fill="none"/><path d="M861.5 363 Q849.5 370 861.5 378 Z" stroke="#ececec" stroke-width="1" fill="none"/><path d="M879.5 363 Q891.5 370 879.5 378 Z" stroke="#ececec" stroke-width="1" fill="none"/><rect x="865.5" y="362" width="7.0" height="17.5" stroke="#ebebeb" stroke-width="1" fill="none"/><path d="M869.0 364 L869.0 377" stroke="#eeeeee" stroke-width="1" fill="none"/><path d="M852.5 383.0A3 3 0 1 1 852.5 383.0" stroke="#ebebeb" stroke-width="1" fill="none"/><path d="M894.5 357.0A3 3 0 1 1 894.5 357.0" stroke="#ebebeb" stroke-width="1" fill="none"/><path d="M1046.9 384.5A21 21 0 0 1 1064.8 350.1" stroke="#ebebeb" stroke-width="1" fill="none"/><path d="M1051.1 381.0A15.5 15.5 0 0 1 1064.4 355.6" stroke="#ebebeb" stroke-width="1" fill="none"/><path d="M1090.8 350.1A21 21 0 0 1 1105.1 384.5" stroke="#ebebeb" stroke-width="1" fill="none"/><path d="M1090.4 355.6A15.5 15.5 0 0 1 1100.9 381.0" stroke="#ebebeb" stroke-width="1" fill="none"/><path d="M1048.0 375.0 L1042.7 376.4" stroke="#ebebeb" stroke-width="1" fill="none"/><path d="M1104.0 367.0 L1109.3 365.6" stroke="#ebebeb" stroke-width="1" fill="none"/><path d="M1048.4 365.7 L1043.3 363.8" stroke="#ebebeb" stroke-width="1" fill="none"/><path d="M1103.6 376.3 L1108.7 378.2" stroke="#ebebeb" stroke-width="1" fill="none"/><path d="M1055.2 357.6 L1052.5 352.8" stroke="#ebebeb" stroke-width="1" fill="none"/><path d="M1096.8 384.4 L1099.5 389.2" stroke="#ebebeb" stroke-width="1" fill="none"/><path d="M1067 363 Q1055 370 1067 378 Z" stroke="#ececec" stroke-width="1" fill="none"/><path d="M1085 363 Q1097 370 1085 378 Z" stroke="#ececec" stroke-width="1" fill="none"/><rect x="1071" y="362" width="7" height="17.5" stroke="#ebebeb" stroke-width="1" fill="none"/><path d="M1074.5 364 L1074.5 377" stroke="#eeeeee" stroke-width="1" fill="none"/><path d="M1058.0 383.0A3 3 0 1 1 1058.0 383.0" stroke="#ebebeb" stroke-width="1" fill="none"/><path d="M1100.0 357.0A3 3 0 1 1 1100.0 357.0" stroke="#ebebeb" stroke-width="1" fill="none"/><polygon points="1146.4,336 1205.8,349 1197.4,387 1137.1,374" fill="none" stroke="#eaeaea" stroke-width="1.3"/><polygon points="1149,341 1201,352 1194,383 1141,372" fill="none" stroke="#eeeeee" stroke-width="1"/><path d="M1155 355 L1197 364" stroke="#ececec" stroke-width="1" fill="none"/><path d="M1152 366 L1194 375" stroke="#ececec" stroke-width="1" fill="none"/><rect x="1211" y="402" width="8" height="6" stroke="#eeeeee" stroke-width="1" fill="none"/><path d="M517 406.5 L553 406.5" stroke="#ececec" stroke-width="1" fill="none"/><path d="M540 406.5 L540 446" stroke="#ececec" stroke-width="1" fill="none"/><path d="M531 419 L553 419" stroke="#ececec" stroke-width="1" fill="none"/><path d="M531 432 L553 432" stroke="#ececec" stroke-width="1" fill="none"/><rect x="514.4" y="446" width="61.6" height="33.3" stroke="#e8e8e8" stroke-width="1.2" fill="none"/><path d="M518 448 L518 462" stroke="#eaeaea" stroke-width="1" fill="none"/><path d="M518 467 L518 478" stroke="#eaeaea" stroke-width="1" fill="none"/><path d="M521 448 L521 462" stroke="#eaeaea" stroke-width="1" fill="none"/><path d="M521 467 L521 478" stroke="#eaeaea" stroke-width="1" fill="none"/><path d="M524 448 L524 462" stroke="#eaeaea" stroke-width="1" fill="none"/><path d="M524 467 L524 478" stroke="#eaeaea" stroke-width="1" fill="none"/><path d="M527 448 L527 462" stroke="#eaeaea" stroke-width="1" fill="none"/><path d="M527 467 L527 478" stroke="#eaeaea" stroke-width="1" fill="none"/><path d="M530 448 L530 462" stroke="#eaeaea" stroke-width="1" fill="none"/><path d="M530 467 L530 478" stroke="#eaeaea" stroke-width="1" fill="none"/><path d="M533 448 L533 462" stroke="#eaeaea" stroke-width="1" fill="none"/><path d="M533 467 L533 478" stroke="#eaeaea" stroke-width="1" fill="none"/><path d="M536 448 L536 462" stroke="#eaeaea" stroke-width="1" fill="none"/><path d="M536 467 L536 478" stroke="#eaeaea" stroke-width="1" fill="none"/><path d="M539 448 L539 462" stroke="#eaeaea" stroke-width="1" fill="none"/><path d="M539 467 L539 478" stroke="#eaeaea" stroke-width="1" fill="none"/><path d="M542 448 L542 462" stroke="#eaeaea" stroke-width="1" fill="none"/><path d="M542 467 L542 478" stroke="#eaeaea" stroke-width="1" fill="none"/><path d="M545 448 L545 462" stroke="#eaeaea" stroke-width="1" fill="none"/><path d="M545 467 L545 478" stroke="#eaeaea" stroke-width="1" fill="none"/><path d="M548 448 L548 462" stroke="#eaeaea" stroke-width="1" fill="none"/><path d="M548 467 L548 478" stroke="#eaeaea" stroke-width="1" fill="none"/><path d="M551 448 L551 462" stroke="#eaeaea" stroke-width="1" fill="none"/><path d="M551 467 L551 478" stroke="#eaeaea" stroke-width="1" fill="none"/><path d="M554 448 L554 462" stroke="#eaeaea" stroke-width="1" fill="none"/><path d="M554 467 L554 478" stroke="#eaeaea" stroke-width="1" fill="none"/><rect x="515" y="462.5" width="45" height="4.0" stroke="#e8e8e8" stroke-width="1" fill="none"/><rect x="507.3" y="479.3" width="68.4" height="123.9" stroke="#e8e8e8" stroke-width="1.3" fill="none"/><rect x="510" y="482" width="63" height="118.5" stroke="#f0f0f0" stroke-width="1" fill="none"/><path d="M541.5 482 L541.5 600" stroke="#eeeeee" stroke-width="1" fill="none"/><rect x="514" y="493" width="21" height="27" stroke="#ebebeb" stroke-width="1" fill="none"/><path d="M514 493 L535 520" stroke="#ebebeb" stroke-width="1" fill="none"/><path d="M535 493 L514 520" stroke="#ebebeb" stroke-width="1" fill="none"/><rect x="545" y="493" width="22" height="27" stroke="#ebebeb" stroke-width="1" fill="none"/><path d="M545 493 L567 520" stroke="#ebebeb" stroke-width="1" fill="none"/><path d="M567 493 L545 520" stroke="#ebebeb" stroke-width="1" fill="none"/><rect x="514" y="525" width="21" height="28" stroke="#ebebeb" stroke-width="1" fill="none"/><path d="M514 525 L535 553" stroke="#ebebeb" stroke-width="1" fill="none"/><path d="M535 525 L514 553" stroke="#ebebeb" stroke-width="1" fill="none"/><rect x="545" y="525" width="22" height="28" stroke="#ebebeb" stroke-width="1" fill="none"/><path d="M545 525 L567 553" stroke="#ebebeb" stroke-width="1" fill="none"/><path d="M567 525 L545 553" stroke="#ebebeb" stroke-width="1" fill="none"/><rect x="545" y="561" width="22" height="29" stroke="#ebebeb" stroke-width="1" fill="none"/><path d="M545 561 L567 590" stroke="#ebebeb" stroke-width="1" fill="none"/><path d="M567 561 L545 590" stroke="#ebebeb" stroke-width="1" fill="none"/><rect x="514" y="561" width="23" height="39" stroke="#eeeeee" stroke-width="1" fill="none"/><rect x="571" y="497" width="5" height="10" stroke="#eeeeee" stroke-width="1" fill="none"/><rect x="571" y="520" width="5" height="10" stroke="#eeeeee" stroke-width="1" fill="none"/><rect x="571" y="547" width="5" height="10" stroke="#eeeeee" stroke-width="1" fill="none"/><rect x="571" y="572" width="5" height="10" stroke="#eeeeee" stroke-width="1" fill="none"/><rect x="571" y="590" width="5" height="10" stroke="#eeeeee" stroke-width="1" fill="none"/><rect x="606" y="447" width="124" height="95.3" stroke="#e8e8e8" stroke-width="1.3" fill="none"/><rect x="608.5" y="449.5" width="119.0" height="90.5" stroke="#f0f0f0" stroke-width="1" fill="none"/><rect x="673" y="475.2" width="46.8" height="41.8" stroke="#e8e8e8" stroke-width="1.2" fill="none"/><path d="M606 495.6 L673 495.6" stroke="#e6e6e6" stroke-width="1.5" fill="none"/><rect x="623" y="480" width="5" height="14" stroke="#eeeeee" stroke-width="1" fill="none"/><rect x="623" y="497" width="5" height="13" stroke="#eeeeee" stroke-width="1" fill="none"/><rect x="634" y="480" width="5" height="14" stroke="#eeeeee" stroke-width="1" fill="none"/><rect x="634" y="497" width="5" height="13" stroke="#eeeeee" stroke-width="1" fill="none"/><rect x="645" y="480" width="5" height="14" stroke="#eeeeee" stroke-width="1" fill="none"/><rect x="645" y="497" width="5" height="13" stroke="#eeeeee" stroke-width="1" fill="none"/><rect x="656" y="480" width="5" height="14" stroke="#eeeeee" stroke-width="1" fill="none"/><rect x="656" y="497" width="5" height="13" stroke="#eeeeee" stroke-width="1" fill="none"/><rect x="667" y="480" width="5" height="14" stroke="#eeeeee" stroke-width="1" fill="none"/><rect x="667" y="497" width="5" height="13" stroke="#eeeeee" stroke-width="1" fill="none"/><rect x="618" y="452" width="6" height="6" stroke="#eeeeee" stroke-width="1" fill="none"/><rect x="640" y="452" width="6" height="6" stroke="#eeeeee" stroke-width="1" fill="none"/><rect x="661" y="452" width="6" height="6" stroke="#eeeeee" stroke-width="1" fill="none"/><rect x="612" y="465" width="6" height="6" stroke="#eeeeee" stroke-width="1" fill="none"/><rect x="638" y="465" width="6" height="6" stroke="#eeeeee" stroke-width="1" fill="none"/><rect x="698" y="465" width="6" height="6" stroke="#eeeeee" stroke-width="1" fill="none"/><rect x="612" y="525" width="6" height="6" stroke="#eeeeee" stroke-width="1" fill="none"/><rect x="638" y="525" width="6" height="6" stroke="#eeeeee" stroke-width="1" fill="none"/><rect x="708" y="527" width="6" height="6" stroke="#eeeeee" stroke-width="1" fill="none"/><path d="M692 447 L692 460" stroke="#eeeeee" stroke-width="1" fill="none"/><path d="M612 455 L680 455" stroke="#eeeeee" stroke-width="1" fill="none"/><rect x="607.5" y="535" width="94.8" height="63.6" stroke="#e8e8e8" stroke-width="1.3" fill="none"/><rect x="613" y="538" width="25" height="14" stroke="#ebebeb" stroke-width="1" fill="none"/><path d="M613 538 L638 552" stroke="#ebebeb" stroke-width="1" fill="none"/><path d="M638 538 L613 552" stroke="#ebebeb" stroke-width="1" fill="none"/><rect x="634" y="548" width="68" height="50" stroke="#eeeeee" stroke-width="1" fill="none"/><path d="M640.0 554 L640.0 570" stroke="#eaeaea" stroke-width="1" fill="none"/><path d="M640.0 577 L640.0 596" stroke="#eaeaea" stroke-width="1" fill="none"/><path d="M642.8 554 L642.8 570" stroke="#eaeaea" stroke-width="1" fill="none"/><path d="M642.8 577 L642.8 596" stroke="#eaeaea" stroke-width="1" fill="none"/><path d="M645.6 554 L645.6 570" stroke="#eaeaea" stroke-width="1" fill="none"/><path d="M645.6 577 L645.6 596" stroke="#eaeaea" stroke-width="1" fill="none"/><path d="M648.4 554 L648.4 570" stroke="#eaeaea" stroke-width="1" fill="none"/><path d="M648.4 577 L648.4 596" stroke="#eaeaea" stroke-width="1" fill="none"/><path d="M651.2 554 L651.2 570" stroke="#eaeaea" stroke-width="1" fill="none"/><path d="M651.2 577 L651.2 596" stroke="#eaeaea" stroke-width="1" fill="none"/><path d="M654.0 554 L654.0 570" stroke="#eaeaea" stroke-width="1" fill="none"/><path d="M654.0 577 L654.0 596" stroke="#eaeaea" stroke-width="1" fill="none"/><path d="M656.8 554 L656.8 570" stroke="#eaeaea" stroke-width="1" fill="none"/><path d="M656.8 577 L656.8 596" stroke="#eaeaea" stroke-width="1" fill="none"/><path d="M659.6 554 L659.6 570" stroke="#eaeaea" stroke-width="1" fill="none"/><path d="M659.6 577 L659.6 596" stroke="#eaeaea" stroke-width="1" fill="none"/><path d="M662.4 554 L662.4 570" stroke="#eaeaea" stroke-width="1" fill="none"/><path d="M662.4 577 L662.4 596" stroke="#eaeaea" stroke-width="1" fill="none"/><path d="M665.2 554 L665.2 570" stroke="#eaeaea" stroke-width="1" fill="none"/><path d="M665.2 577 L665.2 596" stroke="#eaeaea" stroke-width="1" fill="none"/><path d="M668.0 554 L668.0 570" stroke="#eaeaea" stroke-width="1" fill="none"/><path d="M668.0 577 L668.0 596" stroke="#eaeaea" stroke-width="1" fill="none"/><path d="M670.8 554 L670.8 570" stroke="#eaeaea" stroke-width="1" fill="none"/><path d="M670.8 577 L670.8 596" stroke="#eaeaea" stroke-width="1" fill="none"/><path d="M673.6 554 L673.6 570" stroke="#eaeaea" stroke-width="1" fill="none"/><path d="M673.6 577 L673.6 596" stroke="#eaeaea" stroke-width="1" fill="none"/><path d="M676.4 554 L676.4 570" stroke="#eaeaea" stroke-width="1" fill="none"/><path d="M676.4 577 L676.4 596" stroke="#eaeaea" stroke-width="1" fill="none"/><rect x="634" y="571" width="45" height="5.5" stroke="#e5e5e5" stroke-width="1.2" fill="none"/><rect x="643" y="540" width="7" height="6" stroke="#eeeeee" stroke-width="1" fill="none"/><rect x="653" y="540" width="7" height="6" stroke="#eeeeee" stroke-width="1" fill="none"/><rect x="663" y="540" width="7" height="6" stroke="#eeeeee" stroke-width="1" fill="none"/><rect x="673" y="540" width="7" height="6" stroke="#eeeeee" stroke-width="1" fill="none"/><rect x="754.8" y="447" width="29.1" height="104" stroke="#e8e8e8" stroke-width="1.2" fill="none"/><path d="M754.8 497 L783.9 497" stroke="#e8e8e8" stroke-width="1" fill="none"/><path d="M754.8 520 L783.9 520" stroke="#e8e8e8" stroke-width="1" fill="none"/><path d="M754.8 488.0A10 10 0 0 1 754.8 468.0" stroke="#ebebeb" stroke-width="1" fill="none"/><rect x="760" y="503" width="6" height="6" stroke="#eeeeee" stroke-width="1" fill="none"/><rect x="772" y="503" width="6" height="8" stroke="#eeeeee" stroke-width="1" fill="none"/><rect x="760" y="527" width="6" height="6" stroke="#eeeeee" stroke-width="1" fill="none"/><rect x="772" y="527" width="6" height="8" stroke="#eeeeee" stroke-width="1" fill="none"/><rect x="702.3" y="571.4" width="81.7" height="29.2" stroke="#e8e8e8" stroke-width="1.2" fill="none"/><path d="M727 571.4 L727 600.6" stroke="#e8e8e8" stroke-width="1" fill="none"/><path d="M757 571.4 L757 600.6" stroke="#e8e8e8" stroke-width="1" fill="none"/><path d="M740.0 581.4A10 10 0 0 1 730.0 571.4" stroke="#ebebeb" stroke-width="1" fill="none"/><path d="M780.0 571.4A10 10 0 0 1 770.0 581.4" stroke="#ebebeb" stroke-width="1" fill="none"/><rect x="636.7" y="602" width="147.3" height="93.4" stroke="#e8e8e8" stroke-width="1.2" fill="none"/><path d="M636.7 635.6 L784 635.6" stroke="#e8e8e8" stroke-width="1" fill="none"/><path d="M680.4 635.6 L680.4 695" stroke="#e8e8e8" stroke-width="1" fill="none"/><rect x="652" y="612" width="18" height="18" stroke="#eeeeee" stroke-width="1" fill="none"/><rect x="682" y="603" width="18" height="9" stroke="#eeeeee" stroke-width="1" fill="none"/><rect x="683" y="603" width="19" height="10" stroke="#ebebeb" stroke-width="1" fill="none"/><path d="M683 603 L702 613" stroke="#ebebeb" stroke-width="1" fill="none"/><path d="M702 603 L683 613" stroke="#ebebeb" stroke-width="1" fill="none"/><rect x="700" y="642" width="22" height="14" stroke="#eeeeee" stroke-width="1" fill="none"/><rect x="694" y="646" width="5" height="5" stroke="#eeeeee" stroke-width="1" fill="none"/><rect x="724" y="646" width="5" height="5" stroke="#eeeeee" stroke-width="1" fill="none"/><rect x="645" y="660" width="25" height="25" stroke="#eeeeee" stroke-width="1" fill="none"/><rect x="750" y="675" width="22" height="15" stroke="#eeeeee" stroke-width="1" fill="none"/><path d="M740.0 618.0A10 10 0 0 1 730.0 628.0" stroke="#ebebeb" stroke-width="1" fill="none"/><path d="M652.0 700.0A8 8 0 0 1 660.0 692.0" stroke="#ebebeb" stroke-width="1" fill="none"/><rect x="577.6" y="621.3" width="33.8" height="73.7" stroke="#e8e8e8" stroke-width="1.2" fill="none"/><rect x="508" y="620" width="51.2" height="55.7" stroke="#e8e8e8" stroke-width="1.2" fill="none"/><path d="M508 648 L559 648" stroke="#e8e8e8" stroke-width="1" fill="none"/><path d="M536 620 L536 675" stroke="#e8e8e8" stroke-width="1" fill="none"/><path d="M508.0 644.0A10 10 0 0 1 508.0 624.0" stroke="#ebebeb" stroke-width="1" fill="none"/><path d="M508.0 672.0A10 10 0 0 1 508.0 652.0" stroke="#ebebeb" stroke-width="1" fill="none"/><rect x="543" y="632" width="8" height="8" stroke="#eeeeee" stroke-width="1" fill="none"/><rect x="543" y="656" width="8" height="8" stroke="#eeeeee" stroke-width="1" fill="none"/><rect x="445.2" y="608.7" width="34.3" height="10.9" stroke="#ececec" stroke-width="1" fill="none"/><path d="M446.5 608.7A3.5 3.5 0 0 1 453.5 608.7" stroke="#ebebeb" stroke-width="1" fill="none"/><path d="M454.8 608.7A3.5 3.5 0 0 1 461.8 608.7" stroke="#ebebeb" stroke-width="1" fill="none"/><path d="M463.1 608.7A3.5 3.5 0 0 1 470.1 608.7" stroke="#ebebeb" stroke-width="1" fill="none"/><path d="M471.4 608.7A3.5 3.5 0 0 1 478.4 608.7" stroke="#ebebeb" stroke-width="1" fill="none"/><rect x="435" y="629.8" width="55.6" height="48.7" stroke="#e8e8e8" stroke-width="1.2" fill="none"/><path d="M435 643 L490.6 643" stroke="#e8e8e8" stroke-width="1" fill="none"/><path d="M462.5 643 L462.5 678.5" stroke="#e8e8e8" stroke-width="1" fill="none"/><path d="M438.0 663.0A10 10 0 0 1 448.0 653.0" stroke="#ebebeb" stroke-width="1" fill="none"/><path d="M478.0 653.0A10 10 0 0 1 488.0 663.0" stroke="#ebebeb" stroke-width="1" fill="none"/><rect x="422" y="612" width="7" height="7" stroke="#eeeeee" stroke-width="1" fill="none"/><rect x="422" y="681" width="7" height="7" stroke="#eeeeee" stroke-width="1" fill="none"/><path d="M807.3 449 L1135 449" stroke="#e8e8e8" stroke-width="1.3" fill="none"/><path d="M810 451.5 L1133 451.5" stroke="#f0f0f0" stroke-width="1" fill="none"/><path d="M805.8 447.5 L805.8 690" stroke="#e8e8e8" stroke-width="1.2" fill="none"/><path d="M808.8 449 L808.8 693" stroke="#f0f0f0" stroke-width="1" fill="none"/><path d="M972 449 L972 694" stroke="#e8e8e8" stroke-width="1.3" fill="none"/><path d="M974.5 451 L974.5 694" stroke="#f0f0f0" stroke-width="1" fill="none"/><path d="M1135 449 L1135 695" stroke="#e8e8e8" stroke-width="1.2" fill="none"/><path d="M1133 451 L1133 695" stroke="#f0f0f0" stroke-width="1" fill="none"/><rect x="832.0" y="471" width="11.5" height="16" stroke="#eeeeee" stroke-width="1" fill="none"/><rect x="829.0" y="474" width="3.0" height="5" stroke="#eeeeee" stroke-width="1" fill="none"/><rect x="829.0" y="480" width="3.0" height="5" stroke="#eeeeee" stroke-width="1" fill="none"/><rect x="832.0" y="488" width="11.5" height="16" stroke="#eeeeee" stroke-width="1" fill="none"/><rect x="829.0" y="491" width="3.0" height="5" stroke="#eeeeee" stroke-width="1" fill="none"/><rect x="829.0" y="497" width="3.0" height="5" stroke="#eeeeee" stroke-width="1" fill="none"/><rect x="832.0" y="505" width="11.5" height="16" stroke="#eeeeee" stroke-width="1" fill="none"/><rect x="829.0" y="508" width="3.0" height="5" stroke="#eeeeee" stroke-width="1" fill="none"/><rect x="829.0" y="514" width="3.0" height="5" stroke="#eeeeee" stroke-width="1" fill="none"/><rect x="852.4" y="471" width="11.5" height="16" stroke="#eeeeee" stroke-width="1" fill="none"/><rect x="849.4" y="474" width="3.0" height="5" stroke="#eeeeee" stroke-width="1" fill="none"/><rect x="849.4" y="480" width="3.0" height="5" stroke="#eeeeee" stroke-width="1" fill="none"/><rect x="852.4" y="488" width="11.5" height="16" stroke="#eeeeee" stroke-width="1" fill="none"/><rect x="849.4" y="491" width="3.0" height="5" stroke="#eeeeee" stroke-width="1" fill="none"/><rect x="849.4" y="497" width="3.0" height="5" stroke="#eeeeee" stroke-width="1" fill="none"/><rect x="852.4" y="505" width="11.5" height="16" stroke="#eeeeee" stroke-width="1" fill="none"/><rect x="849.4" y="508" width="3.0" height="5" stroke="#eeeeee" stroke-width="1" fill="none"/><rect x="849.4" y="514" width="3.0" height="5" stroke="#eeeeee" stroke-width="1" fill="none"/><rect x="872.8" y="471" width="11.5" height="16" stroke="#eeeeee" stroke-width="1" fill="none"/><rect x="869.8" y="474" width="3.0" height="5" stroke="#eeeeee" stroke-width="1" fill="none"/><rect x="869.8" y="480" width="3.0" height="5" stroke="#eeeeee" stroke-width="1" fill="none"/><rect x="872.8" y="488" width="11.5" height="16" stroke="#eeeeee" stroke-width="1" fill="none"/><rect x="869.8" y="491" width="3.0" height="5" stroke="#eeeeee" stroke-width="1" fill="none"/><rect x="869.8" y="497" width="3.0" height="5" stroke="#eeeeee" stroke-width="1" fill="none"/><rect x="872.8" y="505" width="11.5" height="16" stroke="#eeeeee" stroke-width="1" fill="none"/><rect x="869.8" y="508" width="3.0" height="5" stroke="#eeeeee" stroke-width="1" fill="none"/><rect x="869.8" y="514" width="3.0" height="5" stroke="#eeeeee" stroke-width="1" fill="none"/><rect x="893.2" y="471" width="11.5" height="16" stroke="#eeeeee" stroke-width="1" fill="none"/><rect x="890.2" y="474" width="3.0" height="5" stroke="#eeeeee" stroke-width="1" fill="none"/><rect x="890.2" y="480" width="3.0" height="5" stroke="#eeeeee" stroke-width="1" fill="none"/><rect x="893.2" y="488" width="11.5" height="16" stroke="#eeeeee" stroke-width="1" fill="none"/><rect x="890.2" y="491" width="3.0" height="5" stroke="#eeeeee" stroke-width="1" fill="none"/><rect x="890.2" y="497" width="3.0" height="5" stroke="#eeeeee" stroke-width="1" fill="none"/><rect x="893.2" y="505" width="11.5" height="16" stroke="#eeeeee" stroke-width="1" fill="none"/><rect x="890.2" y="508" width="3.0" height="5" stroke="#eeeeee" stroke-width="1" fill="none"/><rect x="890.2" y="514" width="3.0" height="5" stroke="#eeeeee" stroke-width="1" fill="none"/><rect x="913.6" y="471" width="11.5" height="16" stroke="#eeeeee" stroke-width="1" fill="none"/><rect x="910.6" y="474" width="3.0" height="5" stroke="#eeeeee" stroke-width="1" fill="none"/><rect x="910.6" y="480" width="3.0" height="5" stroke="#eeeeee" stroke-width="1" fill="none"/><rect x="913.6" y="488" width="11.5" height="16" stroke="#eeeeee" stroke-width="1" fill="none"/><rect x="910.6" y="491" width="3.0" height="5" stroke="#eeeeee" stroke-width="1" fill="none"/><rect x="910.6" y="497" width="3.0" height="5" stroke="#eeeeee" stroke-width="1" fill="none"/><rect x="913.6" y="505" width="11.5" height="16" stroke="#eeeeee" stroke-width="1" fill="none"/><rect x="910.6" y="508" width="3.0" height="5" stroke="#eeeeee" stroke-width="1" fill="none"/><rect x="910.6" y="514" width="3.0" height="5" stroke="#eeeeee" stroke-width="1" fill="none"/><rect x="934.0" y="471" width="11.5" height="16" stroke="#eeeeee" stroke-width="1" fill="none"/><rect x="931.0" y="474" width="3.0" height="5" stroke="#eeeeee" stroke-width="1" fill="none"/><rect x="931.0" y="480" width="3.0" height="5" stroke="#eeeeee" stroke-width="1" fill="none"/><rect x="934.0" y="488" width="11.5" height="16" stroke="#eeeeee" stroke-width="1" fill="none"/><rect x="931.0" y="491" width="3.0" height="5" stroke="#eeeeee" stroke-width="1" fill="none"/><rect x="931.0" y="497" width="3.0" height="5" stroke="#eeeeee" stroke-width="1" fill="none"/><rect x="934.0" y="505" width="11.5" height="16" stroke="#eeeeee" stroke-width="1" fill="none"/><rect x="931.0" y="508" width="3.0" height="5" stroke="#eeeeee" stroke-width="1" fill="none"/><rect x="931.0" y="514" width="3.0" height="5" stroke="#eeeeee" stroke-width="1" fill="none"/><rect x="837" y="578.5" width="17" height="16.0" stroke="#eeeeee" stroke-width="1" fill="none"/><path d="M837 586.5 L854 586.5" stroke="#eeeeee" stroke-width="1" fill="none"/><rect x="840" y="574.0" width="5" height="4.5" stroke="#eeeeee" stroke-width="1" fill="none"/><rect x="840" y="594.5" width="5" height="4.5" stroke="#eeeeee" stroke-width="1" fill="none"/><rect x="847" y="574.0" width="5" height="4.5" stroke="#eeeeee" stroke-width="1" fill="none"/><rect x="847" y="594.5" width="5" height="4.5" stroke="#eeeeee" stroke-width="1" fill="none"/><rect x="832" y="580.5" width="5" height="5.0" stroke="#eeeeee" stroke-width="1" fill="none"/><rect x="832" y="587.5" width="5" height="5.0" stroke="#eeeeee" stroke-width="1" fill="none"/><rect x="837" y="619" width="17" height="16" stroke="#eeeeee" stroke-width="1" fill="none"/><path d="M837 627 L854 627" stroke="#eeeeee" stroke-width="1" fill="none"/><rect x="840" y="614.5" width="5" height="4.5" stroke="#eeeeee" stroke-width="1" fill="none"/><rect x="840" y="635" width="5" height="4.5" stroke="#eeeeee" stroke-width="1" fill="none"/><rect x="847" y="614.5" width="5" height="4.5" stroke="#eeeeee" stroke-width="1" fill="none"/><rect x="847" y="635" width="5" height="4.5" stroke="#eeeeee" stroke-width="1" fill="none"/><rect x="832" y="621" width="5" height="5" stroke="#eeeeee" stroke-width="1" fill="none"/><rect x="832" y="628" width="5" height="5" stroke="#eeeeee" stroke-width="1" fill="none"/><rect x="837" y="660" width="17" height="16" stroke="#eeeeee" stroke-width="1" fill="none"/><path d="M837 668 L854 668" stroke="#eeeeee" stroke-width="1" fill="none"/><rect x="840" y="655.5" width="5" height="4.5" stroke="#eeeeee" stroke-width="1" fill="none"/><rect x="840" y="676" width="5" height="4.5" stroke="#eeeeee" stroke-width="1" fill="none"/><rect x="847" y="655.5" width="5" height="4.5" stroke="#eeeeee" stroke-width="1" fill="none"/><rect x="847" y="676" width="5" height="4.5" stroke="#eeeeee" stroke-width="1" fill="none"/><rect x="832" y="662" width="5" height="5" stroke="#eeeeee" stroke-width="1" fill="none"/><rect x="832" y="669" width="5" height="5" stroke="#eeeeee" stroke-width="1" fill="none"/><rect x="880" y="578.5" width="17" height="16.0" stroke="#eeeeee" stroke-width="1" fill="none"/><path d="M880 586.5 L897 586.5" stroke="#eeeeee" stroke-width="1" fill="none"/><rect x="883" y="574.0" width="5" height="4.5" stroke="#eeeeee" stroke-width="1" fill="none"/><rect x="883" y="594.5" width="5" height="4.5" stroke="#eeeeee" stroke-width="1" fill="none"/><rect x="890" y="574.0" width="5" height="4.5" stroke="#eeeeee" stroke-width="1" fill="none"/><rect x="890" y="594.5" width="5" height="4.5" stroke="#eeeeee" stroke-width="1" fill="none"/><rect x="875" y="580.5" width="5" height="5.0" stroke="#eeeeee" stroke-width="1" fill="none"/><rect x="875" y="587.5" width="5" height="5.0" stroke="#eeeeee" stroke-width="1" fill="none"/><rect x="880" y="619" width="17" height="16" stroke="#eeeeee" stroke-width="1" fill="none"/><path d="M880 627 L897 627" stroke="#eeeeee" stroke-width="1" fill="none"/><rect x="883" y="614.5" width="5" height="4.5" stroke="#eeeeee" stroke-width="1" fill="none"/><rect x="883" y="635" width="5" height="4.5" stroke="#eeeeee" stroke-width="1" fill="none"/><rect x="890" y="614.5" width="5" height="4.5" stroke="#eeeeee" stroke-width="1" fill="none"/><rect x="890" y="635" width="5" height="4.5" stroke="#eeeeee" stroke-width="1" fill="none"/><rect x="875" y="621" width="5" height="5" stroke="#eeeeee" stroke-width="1" fill="none"/><rect x="875" y="628" width="5" height="5" stroke="#eeeeee" stroke-width="1" fill="none"/><rect x="880" y="660" width="17" height="16" stroke="#eeeeee" stroke-width="1" fill="none"/><path d="M880 668 L897 668" stroke="#eeeeee" stroke-width="1" fill="none"/><rect x="883" y="655.5" width="5" height="4.5" stroke="#eeeeee" stroke-width="1" fill="none"/><rect x="883" y="676" width="5" height="4.5" stroke="#eeeeee" stroke-width="1" fill="none"/><rect x="890" y="655.5" width="5" height="4.5" stroke="#eeeeee" stroke-width="1" fill="none"/><rect x="890" y="676" width="5" height="4.5" stroke="#eeeeee" stroke-width="1" fill="none"/><rect x="875" y="662" width="5" height="5" stroke="#eeeeee" stroke-width="1" fill="none"/><rect x="875" y="669" width="5" height="5" stroke="#eeeeee" stroke-width="1" fill="none"/><rect x="927" y="578.5" width="17" height="16.0" stroke="#eeeeee" stroke-width="1" fill="none"/><path d="M927 586.5 L944 586.5" stroke="#eeeeee" stroke-width="1" fill="none"/><rect x="930" y="574.0" width="5" height="4.5" stroke="#eeeeee" stroke-width="1" fill="none"/><rect x="930" y="594.5" width="5" height="4.5" stroke="#eeeeee" stroke-width="1" fill="none"/><rect x="937" y="574.0" width="5" height="4.5" stroke="#eeeeee" stroke-width="1" fill="none"/><rect x="937" y="594.5" width="5" height="4.5" stroke="#eeeeee" stroke-width="1" fill="none"/><rect x="922" y="580.5" width="5" height="5.0" stroke="#eeeeee" stroke-width="1" fill="none"/><rect x="922" y="587.5" width="5" height="5.0" stroke="#eeeeee" stroke-width="1" fill="none"/><rect x="927" y="619" width="17" height="16" stroke="#eeeeee" stroke-width="1" fill="none"/><path d="M927 627 L944 627" stroke="#eeeeee" stroke-width="1" fill="none"/><rect x="930" y="614.5" width="5" height="4.5" stroke="#eeeeee" stroke-width="1" fill="none"/><rect x="930" y="635" width="5" height="4.5" stroke="#eeeeee" stroke-width="1" fill="none"/><rect x="937" y="614.5" width="5" height="4.5" stroke="#eeeeee" stroke-width="1" fill="none"/><rect x="937" y="635" width="5" height="4.5" stroke="#eeeeee" stroke-width="1" fill="none"/><rect x="922" y="621" width="5" height="5" stroke="#eeeeee" stroke-width="1" fill="none"/><rect x="922" y="628" width="5" height="5" stroke="#eeeeee" stroke-width="1" fill="none"/><rect x="927" y="660" width="17" height="16" stroke="#eeeeee" stroke-width="1" fill="none"/><path d="M927 668 L944 668" stroke="#eeeeee" stroke-width="1" fill="none"/><rect x="930" y="655.5" width="5" height="4.5" stroke="#eeeeee" stroke-width="1" fill="none"/><rect x="930" y="676" width="5" height="4.5" stroke="#eeeeee" stroke-width="1" fill="none"/><rect x="937" y="655.5" width="5" height="4.5" stroke="#eeeeee" stroke-width="1" fill="none"/><rect x="937" y="676" width="5" height="4.5" stroke="#eeeeee" stroke-width="1" fill="none"/><rect x="922" y="662" width="5" height="5" stroke="#eeeeee" stroke-width="1" fill="none"/><rect x="922" y="669" width="5" height="5" stroke="#eeeeee" stroke-width="1" fill="none"/><rect x="812" y="531" width="14" height="16" stroke="#ececec" stroke-width="1" fill="none"/><rect x="815" y="534" width="13" height="11" stroke="#e8e8e8" stroke-width="1" fill="#f2f2f2"/><path d="M806.0 455.0A10 10 0 0 1 806.0 475.0" stroke="#ebebeb" stroke-width="1" fill="none"/><path d="M806.0 505.0A10 10 0 0 1 806.0 525.0" stroke="#ebebeb" stroke-width="1" fill="none"/><path d="M806.0 550.0A10 10 0 0 1 806.0 570.0" stroke="#ebebeb" stroke-width="1" fill="none"/><path d="M806.0 675.0A10 10 0 0 1 816.0 685.0" stroke="#ebebeb" stroke-width="1" fill="none"/><rect x="807" y="490" width="12" height="31" stroke="#ececec" stroke-width="1" fill="none"/><rect x="807" y="583" width="12" height="87" stroke="#ececec" stroke-width="1" fill="none"/><rect x="1004.5" y="468.7" width="16.0" height="16.0" stroke="#eeeeee" stroke-width="1" fill="none"/><rect x="1020.5" y="470.7" width="4.0" height="5.0" stroke="#eeeeee" stroke-width="1" fill="none"/><rect x="1020.5" y="477.7" width="4.0" height="5.0" stroke="#eeeeee" stroke-width="1" fill="none"/><rect x="1006.5" y="465.7" width="5.0" height="3.0" stroke="#eeeeee" stroke-width="1" fill="none"/><rect x="1006.5" y="484.7" width="5.0" height="3.0" stroke="#eeeeee" stroke-width="1" fill="none"/><rect x="1012.5" y="465.7" width="5.0" height="3.0" stroke="#eeeeee" stroke-width="1" fill="none"/><rect x="1012.5" y="484.7" width="5.0" height="3.0" stroke="#eeeeee" stroke-width="1" fill="none"/><rect x="1004.5" y="509.5" width="16.0" height="16.0" stroke="#eeeeee" stroke-width="1" fill="none"/><rect x="1020.5" y="511.5" width="4.0" height="5.0" stroke="#eeeeee" stroke-width="1" fill="none"/><rect x="1020.5" y="518.5" width="4.0" height="5.0" stroke="#eeeeee" stroke-width="1" fill="none"/><rect x="1006.5" y="506.5" width="5.0" height="3.0" stroke="#eeeeee" stroke-width="1" fill="none"/><rect x="1006.5" y="525.5" width="5.0" height="3.0" stroke="#eeeeee" stroke-width="1" fill="none"/><rect x="1012.5" y="506.5" width="5.0" height="3.0" stroke="#eeeeee" stroke-width="1" fill="none"/><rect x="1012.5" y="525.5" width="5.0" height="3.0" stroke="#eeeeee" stroke-width="1" fill="none"/><rect x="1048" y="468.7" width="16" height="16.0" stroke="#eeeeee" stroke-width="1" fill="none"/><rect x="1064" y="470.7" width="4" height="5.0" stroke="#eeeeee" stroke-width="1" fill="none"/><rect x="1064" y="477.7" width="4" height="5.0" stroke="#eeeeee" stroke-width="1" fill="none"/><rect x="1050" y="465.7" width="5" height="3.0" stroke="#eeeeee" stroke-width="1" fill="none"/><rect x="1050" y="484.7" width="5" height="3.0" stroke="#eeeeee" stroke-width="1" fill="none"/><rect x="1056" y="465.7" width="5" height="3.0" stroke="#eeeeee" stroke-width="1" fill="none"/><rect x="1056" y="484.7" width="5" height="3.0" stroke="#eeeeee" stroke-width="1" fill="none"/><rect x="1048" y="509.5" width="16" height="16.0" stroke="#eeeeee" stroke-width="1" fill="none"/><rect x="1064" y="511.5" width="4" height="5.0" stroke="#eeeeee" stroke-width="1" fill="none"/><rect x="1064" y="518.5" width="4" height="5.0" stroke="#eeeeee" stroke-width="1" fill="none"/><rect x="1050" y="506.5" width="5" height="3.0" stroke="#eeeeee" stroke-width="1" fill="none"/><rect x="1050" y="525.5" width="5" height="3.0" stroke="#eeeeee" stroke-width="1" fill="none"/><rect x="1056" y="506.5" width="5" height="3.0" stroke="#eeeeee" stroke-width="1" fill="none"/><rect x="1056" y="525.5" width="5" height="3.0" stroke="#eeeeee" stroke-width="1" fill="none"/><rect x="1092" y="468.7" width="16" height="16.0" stroke="#eeeeee" stroke-width="1" fill="none"/><rect x="1108" y="470.7" width="4" height="5.0" stroke="#eeeeee" stroke-width="1" fill="none"/><rect x="1108" y="477.7" width="4" height="5.0" stroke="#eeeeee" stroke-width="1" fill="none"/><rect x="1094" y="465.7" width="5" height="3.0" stroke="#eeeeee" stroke-width="1" fill="none"/><rect x="1094" y="484.7" width="5" height="3.0" stroke="#eeeeee" stroke-width="1" fill="none"/><rect x="1100" y="465.7" width="5" height="3.0" stroke="#eeeeee" stroke-width="1" fill="none"/><rect x="1100" y="484.7" width="5" height="3.0" stroke="#eeeeee" stroke-width="1" fill="none"/><rect x="1092" y="509.5" width="16" height="16.0" stroke="#eeeeee" stroke-width="1" fill="none"/><rect x="1108" y="511.5" width="4" height="5.0" stroke="#eeeeee" stroke-width="1" fill="none"/><rect x="1108" y="518.5" width="4" height="5.0" stroke="#eeeeee" stroke-width="1" fill="none"/><rect x="1094" y="506.5" width="5" height="3.0" stroke="#eeeeee" stroke-width="1" fill="none"/><rect x="1094" y="525.5" width="5" height="3.0" stroke="#eeeeee" stroke-width="1" fill="none"/><rect x="1100" y="506.5" width="5" height="3.0" stroke="#eeeeee" stroke-width="1" fill="none"/><rect x="1100" y="525.5" width="5" height="3.0" stroke="#eeeeee" stroke-width="1" fill="none"/><rect x="1005" y="578.7" width="10" height="35.0" stroke="#eeeeee" stroke-width="1" fill="none"/><rect x="1005" y="625.4" width="10" height="52.6" stroke="#eeeeee" stroke-width="1" fill="none"/><rect x="1015" y="581.0" width="4" height="6.0" stroke="#eeeeee" stroke-width="1" fill="none"/><rect x="1015" y="589.5" width="4" height="6.0" stroke="#eeeeee" stroke-width="1" fill="none"/><rect x="1015" y="598.0" width="4" height="6.0" stroke="#eeeeee" stroke-width="1" fill="none"/><rect x="1015" y="606.5" width="4" height="6.0" stroke="#eeeeee" stroke-width="1" fill="none"/><rect x="1015" y="627.0" width="4" height="6.0" stroke="#eeeeee" stroke-width="1" fill="none"/><rect x="1015" y="635.5" width="4" height="6.0" stroke="#eeeeee" stroke-width="1" fill="none"/><rect x="1015" y="644.0" width="4" height="6.0" stroke="#eeeeee" stroke-width="1" fill="none"/><rect x="1015" y="652.5" width="4" height="6.0" stroke="#eeeeee" stroke-width="1" fill="none"/><rect x="1015" y="661.0" width="4" height="6.0" stroke="#eeeeee" stroke-width="1" fill="none"/><rect x="1015" y="669.5" width="4" height="6.0" stroke="#eeeeee" stroke-width="1" fill="none"/><rect x="1025" y="578.7" width="10" height="35.0" stroke="#eeeeee" stroke-width="1" fill="none"/><rect x="1025" y="625.4" width="10" height="52.6" stroke="#eeeeee" stroke-width="1" fill="none"/><rect x="1035" y="581.0" width="4" height="6.0" stroke="#eeeeee" stroke-width="1" fill="none"/><rect x="1035" y="589.5" width="4" height="6.0" stroke="#eeeeee" stroke-width="1" fill="none"/><rect x="1035" y="598.0" width="4" height="6.0" stroke="#eeeeee" stroke-width="1" fill="none"/><rect x="1035" y="606.5" width="4" height="6.0" stroke="#eeeeee" stroke-width="1" fill="none"/><rect x="1035" y="627.0" width="4" height="6.0" stroke="#eeeeee" stroke-width="1" fill="none"/><rect x="1035" y="635.5" width="4" height="6.0" stroke="#eeeeee" stroke-width="1" fill="none"/><rect x="1035" y="644.0" width="4" height="6.0" stroke="#eeeeee" stroke-width="1" fill="none"/><rect x="1035" y="652.5" width="4" height="6.0" stroke="#eeeeee" stroke-width="1" fill="none"/><rect x="1035" y="661.0" width="4" height="6.0" stroke="#eeeeee" stroke-width="1" fill="none"/><rect x="1035" y="669.5" width="4" height="6.0" stroke="#eeeeee" stroke-width="1" fill="none"/><rect x="1045" y="578.7" width="10" height="35.0" stroke="#eeeeee" stroke-width="1" fill="none"/><rect x="1045" y="625.4" width="10" height="52.6" stroke="#eeeeee" stroke-width="1" fill="none"/><rect x="1055" y="581.0" width="4" height="6.0" stroke="#eeeeee" stroke-width="1" fill="none"/><rect x="1055" y="589.5" width="4" height="6.0" stroke="#eeeeee" stroke-width="1" fill="none"/><rect x="1055" y="598.0" width="4" height="6.0" stroke="#eeeeee" stroke-width="1" fill="none"/><rect x="1055" y="606.5" width="4" height="6.0" stroke="#eeeeee" stroke-width="1" fill="none"/><rect x="1055" y="627.0" width="4" height="6.0" stroke="#eeeeee" stroke-width="1" fill="none"/><rect x="1055" y="635.5" width="4" height="6.0" stroke="#eeeeee" stroke-width="1" fill="none"/><rect x="1055" y="644.0" width="4" height="6.0" stroke="#eeeeee" stroke-width="1" fill="none"/><rect x="1055" y="652.5" width="4" height="6.0" stroke="#eeeeee" stroke-width="1" fill="none"/><rect x="1055" y="661.0" width="4" height="6.0" stroke="#eeeeee" stroke-width="1" fill="none"/><rect x="1055" y="669.5" width="4" height="6.0" stroke="#eeeeee" stroke-width="1" fill="none"/><rect x="1065" y="578.7" width="10" height="35.0" stroke="#eeeeee" stroke-width="1" fill="none"/><rect x="1065" y="625.4" width="10" height="52.6" stroke="#eeeeee" stroke-width="1" fill="none"/><rect x="1075" y="581.0" width="4" height="6.0" stroke="#eeeeee" stroke-width="1" fill="none"/><rect x="1075" y="589.5" width="4" height="6.0" stroke="#eeeeee" stroke-width="1" fill="none"/><rect x="1075" y="598.0" width="4" height="6.0" stroke="#eeeeee" stroke-width="1" fill="none"/><rect x="1075" y="606.5" width="4" height="6.0" stroke="#eeeeee" stroke-width="1" fill="none"/><rect x="1075" y="627.0" width="4" height="6.0" stroke="#eeeeee" stroke-width="1" fill="none"/><rect x="1075" y="635.5" width="4" height="6.0" stroke="#eeeeee" stroke-width="1" fill="none"/><rect x="1075" y="644.0" width="4" height="6.0" stroke="#eeeeee" stroke-width="1" fill="none"/><rect x="1075" y="652.5" width="4" height="6.0" stroke="#eeeeee" stroke-width="1" fill="none"/><rect x="1075" y="661.0" width="4" height="6.0" stroke="#eeeeee" stroke-width="1" fill="none"/><rect x="1075" y="669.5" width="4" height="6.0" stroke="#eeeeee" stroke-width="1" fill="none"/><rect x="1085" y="578.7" width="10" height="35.0" stroke="#eeeeee" stroke-width="1" fill="none"/><rect x="1085" y="625.4" width="10" height="52.6" stroke="#eeeeee" stroke-width="1" fill="none"/><rect x="1095" y="581.0" width="4" height="6.0" stroke="#eeeeee" stroke-width="1" fill="none"/><rect x="1095" y="589.5" width="4" height="6.0" stroke="#eeeeee" stroke-width="1" fill="none"/><rect x="1095" y="598.0" width="4" height="6.0" stroke="#eeeeee" stroke-width="1" fill="none"/><rect x="1095" y="606.5" width="4" height="6.0" stroke="#eeeeee" stroke-width="1" fill="none"/><rect x="1095" y="627.0" width="4" height="6.0" stroke="#eeeeee" stroke-width="1" fill="none"/><rect x="1095" y="635.5" width="4" height="6.0" stroke="#eeeeee" stroke-width="1" fill="none"/><rect x="1095" y="644.0" width="4" height="6.0" stroke="#eeeeee" stroke-width="1" fill="none"/><rect x="1095" y="652.5" width="4" height="6.0" stroke="#eeeeee" stroke-width="1" fill="none"/><rect x="1095" y="661.0" width="4" height="6.0" stroke="#eeeeee" stroke-width="1" fill="none"/><rect x="1095" y="669.5" width="4" height="6.0" stroke="#eeeeee" stroke-width="1" fill="none"/><rect x="1102" y="542" width="34" height="20" stroke="#ececec" stroke-width="1" fill="none"/><rect x="1111" y="546" width="13" height="14" stroke="#eaeaea" stroke-width="1" fill="#f0f0f0"/><path d="M1136.0 472.0A10 10 0 0 1 1136.0 452.0" stroke="#ebebeb" stroke-width="1" fill="none"/><path d="M1136.0 540.0A10 10 0 0 1 1136.0 520.0" stroke="#ebebeb" stroke-width="1" fill="none"/><path d="M1136.0 585.0A10 10 0 0 1 1136.0 565.0" stroke="#ebebeb" stroke-width="1" fill="none"/><path d="M1136.0 690.0A10 10 0 0 1 1136.0 670.0" stroke="#ebebeb" stroke-width="1" fill="none"/><rect x="1128" y="472" width="8" height="45" stroke="#eeeeee" stroke-width="1" fill="none"/><rect x="1128" y="583" width="8" height="87" stroke="#eeeeee" stroke-width="1" fill="none"/><path d="M1135 447.5 L1298 447.5" stroke="#e8e8e8" stroke-width="1" fill="none"/><rect x="1157.9" y="447.5" width="70.0" height="68.5" stroke="#e8e8e8" stroke-width="1.2" fill="none"/><path d="M1160.0 468.0A12 12 0 0 1 1160.0 492.0" stroke="#ebebeb" stroke-width="1" fill="none"/><path d="M1227.0 492.0A12 12 0 0 1 1227.0 468.0" stroke="#ebebeb" stroke-width="1" fill="none"/><path d="M1170 480 L1227 480" stroke="#e8e8e8" stroke-width="1.4" fill="none"/><path d="M1190 465 L1190 500" stroke="#ececec" stroke-width="1" fill="none"/><rect x="1196" y="484" width="8" height="12" stroke="#ececec" stroke-width="1" fill="none"/><rect x="1208" y="470" width="6" height="8" stroke="#ececec" stroke-width="1" fill="none"/><rect x="1228" y="447.5" width="35" height="52.5" stroke="#e8e8e8" stroke-width="1" fill="none"/><path d="M1258.0 500.0A10 10 0 0 1 1248.0 510.0" stroke="#ebebeb" stroke-width="1" fill="none"/><path d="M1298 409.5 L1298 481" stroke="#e8e8e8" stroke-width="1.2" fill="none"/><path d="M1298 481 L1340 481" stroke="#e8e8e8" stroke-width="1" fill="none"/><path d="M1313.0 481.0A10 10 0 0 1 1303.0 491.0" stroke="#ebebeb" stroke-width="1" fill="none"/><path d="M1315.0 491.0A10 10 0 0 1 1305.0 481.0" stroke="#ebebeb" stroke-width="1" fill="none"/><rect x="1188.5" y="517.5" width="37.9" height="35.0" stroke="#ebebeb" stroke-width="1" fill="none"/><path d="M1188.5 517.5 L1226.4 552.5" stroke="#ebebeb" stroke-width="1" fill="none"/><path d="M1226.4 517.5 L1188.5 552.5" stroke="#ebebeb" stroke-width="1" fill="none"/><rect x="1163.7" y="554" width="84.6" height="42" stroke="#e8e8e8" stroke-width="1.3" fill="none"/><path d="M1198 555 L1198 571" stroke="#eaeaea" stroke-width="1" fill="none"/><path d="M1198 578 L1198 595" stroke="#eaeaea" stroke-width="1" fill="none"/><path d="M1201 555 L1201 571" stroke="#eaeaea" stroke-width="1" fill="none"/><path d="M1201 578 L1201 595" stroke="#eaeaea" stroke-width="1" fill="none"/><path d="M1204 555 L1204 571" stroke="#eaeaea" stroke-width="1" fill="none"/><path d="M1204 578 L1204 595" stroke="#eaeaea" stroke-width="1" fill="none"/><path d="M1207 555 L1207 571" stroke="#eaeaea" stroke-width="1" fill="none"/><path d="M1207 578 L1207 595" stroke="#eaeaea" stroke-width="1" fill="none"/><path d="M1210 555 L1210 571" stroke="#eaeaea" stroke-width="1" fill="none"/><path d="M1210 578 L1210 595" stroke="#eaeaea" stroke-width="1" fill="none"/><path d="M1213 555 L1213 571" stroke="#eaeaea" stroke-width="1" fill="none"/><path d="M1213 578 L1213 595" stroke="#eaeaea" stroke-width="1" fill="none"/><path d="M1216 555 L1216 571" stroke="#eaeaea" stroke-width="1" fill="none"/><path d="M1216 578 L1216 595" stroke="#eaeaea" stroke-width="1" fill="none"/><path d="M1219 555 L1219 571" stroke="#eaeaea" stroke-width="1" fill="none"/><path d="M1219 578 L1219 595" stroke="#eaeaea" stroke-width="1" fill="none"/><path d="M1222 555 L1222 571" stroke="#eaeaea" stroke-width="1" fill="none"/><path d="M1222 578 L1222 595" stroke="#eaeaea" stroke-width="1" fill="none"/><rect x="1180" y="571" width="50" height="6" stroke="#e6e6e6" stroke-width="1" fill="none"/><rect x="1257" y="545" width="11.7" height="30.8" stroke="#ebebeb" stroke-width="1" fill="none"/><path d="M1257 545 L1268.7 575.8" stroke="#ebebeb" stroke-width="1" fill="none"/><path d="M1268.7 545 L1257 575.8" stroke="#ebebeb" stroke-width="1" fill="none"/><path d="M1161 624 L1161 695" stroke="#e8e8e8" stroke-width="1.2" fill="none"/><path d="M1161 624 L1187 624" stroke="#e8e8e8" stroke-width="1" fill="none"/><path d="M1187 596 L1187 624" stroke="#e8e8e8" stroke-width="1" fill="none"/><rect x="1190" y="605" width="8" height="15" stroke="#eeeeee" stroke-width="1" fill="none"/><path d="M1196.5 628.0A3 3 0 1 1 1196.5 628.0" stroke="#ebebeb" stroke-width="1" fill="none"/><path d="M1152 584.6 L1152 694" stroke="#e8e8e8" stroke-width="1" fill="none"/><path d="M1148 553 L1163 553" stroke="#e8e8e8" stroke-width="1" fill="none"/><rect x="1150" y="520" width="8" height="25" stroke="#eeeeee" stroke-width="1" fill="none"/><path d="M1132.0 610.0A10 10 0 0 1 1122.0 600.0" stroke="#ebebeb" stroke-width="1" fill="none"/></g></svg>
<svg class="a" style="left:694.5px;top:238px" width="18" height="18" viewBox="-9 -9 18 18"><circle r="5.5" fill="#fff" stroke="#6f6f6f" stroke-width="1.6"/><circle r="2.4" fill="none" stroke="#1a9a1a" stroke-width="1" stroke-dasharray="1.6 0.7"/></svg>
<svg class="a" style="left:694.9px;top:255.2px" width="18" height="18" viewBox="-9 -9 18 18"><circle r="5.5" fill="#fff" stroke="#6f6f6f" stroke-width="1.6"/><rect x="-3.3" y="-1.8" width="6.6" height="3.6" rx="0.6" fill="none" stroke="#0a8a0a" stroke-width="0.9"/><rect x="-3.3" y="-1.8" width="2.8" height="3.6" fill="#0a8a0a"/></svg>
<svg class="a" style="left:521.8px;top:400.6px" width="18" height="18" viewBox="-9 -9 18 18"><circle r="5.5" fill="#fff" stroke="#6f6f6f" stroke-width="1.6"/><rect x="-2.8" y="-3.6" width="5.6" height="7.2" fill="#087a08"/></svg>
<svg class="a" style="left:521.8px;top:417.9px" width="18" height="18" viewBox="-9 -9 18 18"><circle r="5.5" fill="#fff" stroke="#6f6f6f" stroke-width="1.6"/><rect x="-2.8" y="-3.6" width="5.6" height="7.2" fill="#087a08"/></svg>
<svg class="a" style="left:618.2px;top:386.2px" width="18" height="18" viewBox="-9 -9 18 18"><circle r="5.5" fill="#fff" stroke="#ff0000" stroke-width="1.8"/><path d="M-3.5 1.5L-2.5-2H2l1.5 1.2V2.2H-3.5z" fill="#ff0000"/></svg>
<svg class="a" style="left:582.4px;top:528px" width="18" height="18" viewBox="-9 -9 18 18"><circle r="5.5" fill="#fff" stroke="#128a12" stroke-width="1.6"/><rect x="-3" y="-2.6" width="6" height="5.2" fill="none" stroke="#128a12" stroke-width="0.9"/><path d="M-1 -2.6v5.2M1 -2.6v5.2" stroke="#128a12" stroke-width="0.8"/></svg>
<svg class="a" style="left:514px;top:593.8px" width="18" height="18" viewBox="-9 -9 18 18"><circle r="5" fill="#fff" stroke="#6f6f6f" stroke-width="1.6"/><path d="M-2.5 2.5L2.8-2.8V1.2L-0.5 2.8z" fill="#0a8a0a"/></svg>
<svg class="a" style="left:944.6px;top:445.8px" width="18" height="18" viewBox="-9 -9 18 18"><circle r="5.3" fill="#fff" stroke="#6f6f6f" stroke-width="1.6"/><circle r="3" fill="#777"/><path d="M-1.5 1.8L1.8-1.8" stroke="#fff" stroke-width="0.9"/></svg>
<svg class="a" style="left:980.5px;top:451px" width="18" height="18" viewBox="-9 -9 18 18"><circle r="5.3" fill="#fff" stroke="#6f6f6f" stroke-width="1.6"/><rect x="-3" y="-2" width="4.5" height="4" fill="#666"/><path d="M1.5 0l2-1.6v3.2z" fill="#666"/></svg>
<svg class="a" style="left:1221.3px;top:314.3px" width="18" height="18" viewBox="-9 -9 18 18"><circle r="5.3" fill="#fff" stroke="#6f6f6f" stroke-width="1.6"/><rect x="-3" y="-2" width="4.5" height="4" fill="#555"/><path d="M1.5 0l2-1.6v3.2z" fill="#555"/></svg>
<div class="a" style="left:351px;top:131px;width:14px;height:14px;overflow:hidden"><svg class="a" style="left:-4px;top:-3px" width="18" height="18" viewBox="-9 -9 18 18"><circle r="5.2" fill="#fff" stroke="#ff0000" stroke-width="1.8"/><path d="M-2.5-1L0-3.3 2.6 0 0 2.6z" fill="#ff0000"/></svg></div>
<div class="a" style="left:377.9px;top:136.3px;width:35.8px;height:31.7px;border:1.3px solid #3a78d0;border-radius:5px;background:#fff"></div>
<div class="a" style="left:389.4px;top:147.5px;width:11.8px;height:7.3px;background:#3a78d0;border-top:1.5px solid #9fbde8"></div>
<div class="a" style="left:420.1px;top:136.3px;width:35.7px;height:31.7px;border:1.3px solid #3a78d0;border-radius:5px;background:#fff"></div>
<svg class="a" style="left:429px;top:144px;" width="18" height="18" viewBox="0 0 18 18"><path d="M3 14.5l1-4L13 1.5a1.3 1.3 0 0 1 1.9 0l0.9 0.9a1.3 1.3 0 0 1 0 1.9L6.8 13.3z M4 10.5l2.8 2.8" fill="none" stroke="#3a78d0" stroke-width="1.2"/></svg>
<div class="a" style="left:462.3px;top:136.7px;width:234.1px;height:35.3px;border:1px solid #d0d0d0;border-radius:4px;background:#fff"></div>
<div class="a" style="left:473.7px;top:146.63px;font-size:15px;line-height:18.75px;color:#333;font-weight:400;">Fit Points</div>
<svg class="a" style="left:655px;top:149px;" width="12" height="11" viewBox="0 0 12 11"><path d="M1.5 1L10.5 10M10.5 1L1.5 10" stroke="#888" stroke-width="1.5"/></svg>
<div class="a" style="left:675px;top:152px;width:0;height:0;border-left:5.0px solid transparent;border-right:5.0px solid transparent;border-top:5px solid #888"></div>
<div class="a" style="left:703.5px;top:136.7px;width:235px;height:35.3px;border:1px solid #e0e0e0;border-radius:4px;background:#f8f8f8"></div>
<div class="a" style="left:715.4px;top:145.73px;font-size:15px;line-height:18.75px;color:#b5b5b5;font-weight:400;">Special Functions</div>
<div class="a" style="left:917px;top:152px;width:0;height:0;border-left:5.0px solid transparent;border-right:5.0px solid transparent;border-top:5px solid #ddd"></div>
<div class="a" style="left:1057.9px;top:136.2px;width:36.3px;height:31.9px;background:#f0bc70;border-radius:5px"></div>
<svg class="a" style="left:1066.1px;top:142.2px" width="20" height="20" viewBox="0 0 20 20"><path d="M10 3.2L17.2 16.2H2.8z" fill="#fff"/><path d="M10 7.5v4.5" stroke="#f0bc70" stroke-width="1.8"/><circle cx="10" cy="14" r="1" fill="#f0bc70"/></svg>
<div class="a" style="left:1100.1px;top:136.2px;width:36.5px;height:31.9px;border:1.3px solid #3a78d0;border-radius:5px;background:#fff"></div>
<svg class="a" style="left:1108.3px;top:142.2px" width="20" height="20" viewBox="0 0 20 20"><path d="M4 6.5h12M4 10h12M4 13.5h12" stroke="#1f5fc4" stroke-width="2.2"/></svg>
<div class="a" style="left:1142.4px;top:136.2px;width:36.5px;height:31.9px;background:#3577ca;border-radius:5px"></div>
<svg class="a" style="left:1150.7px;top:142.2px" width="20" height="20" viewBox="0 0 20 20"><rect x="3.5" y="6" width="10" height="8.5" rx="1" fill="#fff"/><path d="M13 10.2l4.2-3.7v7.4z" fill="#fff"/></svg>
<div class="a" style="left:1184.6px;top:136.2px;width:33.6px;height:31.9px;background:#3577ca;border-radius:5px"></div>
<svg class="a" style="left:1191.4px;top:142.2px" width="20" height="20" viewBox="0 0 20 20"><path d="M5 17.5V4h10v13.5" fill="none" stroke="#fff" stroke-width="1.1"/><path d="M5.5 17V4.5h8V17z" fill="none" stroke="#fff" stroke-width="1.3"/><circle cx="12" cy="11" r="0.8" fill="#fff"/></svg>
<div class="a" style="left:1223.9px;top:136.2px;width:36.2px;height:31.9px;background:#3577ca;border-radius:5px"></div>
<svg class="a" style="left:1232.0px;top:142.2px" width="20" height="20" viewBox="0 0 20 20"><circle cx="10" cy="9.4" r="6.3" fill="none" stroke="#fff" stroke-width="1.1"/><circle cx="10" cy="9.4" r="3.2" fill="#fff"/></svg>
<div class="a" style="left:1266.7px;top:136.2px;width:37.2px;height:31.9px;border:1px solid #e3e3e3;border-radius:5px;background:#fff"></div>
<svg class="a" style="left:1275.3px;top:142.2px" width="20" height="20" viewBox="0 0 20 20"><rect x="5" y="5.5" width="9.3" height="10" fill="none" stroke="#9dbbe6" stroke-width="1.2"/><path d="M9.6 5.5v10" stroke="#9dbbe6" stroke-width="1.2"/><path d="M15.5 9l1.5 1.4-1.5 1.4z" fill="#9dbbe6"/></svg>
<div class="a" style="left:1310.3px;top:136.2px;width:36.3px;height:31.9px;background:#3577ca;border-radius:5px"></div>
<svg class="a" style="left:1318.4px;top:142.2px" width="20" height="20" viewBox="0 0 20 20"><g fill="#3577ca" stroke="#fff" stroke-width="0.9"><rect x="10.5" y="3" width="5" height="6"/><rect x="8" y="5.5" width="5" height="6.5"/><rect x="5" y="9" width="5" height="7"/></g></svg>
<div class="a" style="left:1352.7px;top:136.2px;width:35.9px;height:31.9px;background:#3577ca;border-radius:5px"></div>
<svg class="a" style="left:1360.7px;top:142.2px" width="20" height="20" viewBox="0 0 20 20"><rect x="3.8" y="7.3" width="12.7" height="6.4" rx="3.2" fill="#fff"/><circle cx="13.3" cy="10.5" r="2" fill="#3577ca"/></svg>
<div class="a" style="left:1395.2px;top:136.2px;width:35.5px;height:31.9px;border:1.3px solid #3a78d0;border-radius:5px;background:#fff"></div>
<svg class="a" style="left:1403.0px;top:142.2px" width="20" height="20" viewBox="0 0 20 20"><path d="M10.5 15.5H6.3V4.5h5" fill="none" stroke="#9dbbe6" stroke-width="1"/><rect x="9.8" y="7" width="5.5" height="10" fill="#3577ca"/><path d="M13.5 4.2l1.5-1v2z M6.5 15.8l-1.2 1v-2z" fill="#3577ca"/></svg>
<div class="a" style="left:1439.4px;top:136.2px;width:35.3px;height:31.9px;border:1.3px solid #3a78d0;border-radius:5px;background:#fff"></div>
<svg class="a" style="left:1447.1px;top:142.2px" width="20" height="20" viewBox="0 0 20 20"><circle cx="10" cy="9.5" r="5.3" fill="none" stroke="#1f5fc4" stroke-width="1.3"/><circle cx="10" cy="9.5" r="1.6" fill="#1f5fc4"/><path d="M10 3.5v3.5M10 12v3.5M4 9.5h3.5M12.5 9.5H16" stroke="#1f5fc4" stroke-width="1"/></svg>
<div class="a" style="left:1481.2px;top:136.2px;width:35.6px;height:31.9px;border:1px solid #e3e3e3;border-radius:5px;background:#fff"></div>
<svg class="a" style="left:1489.0px;top:142.2px" width="20" height="20" viewBox="0 0 20 20"><rect x="5" y="5" width="12.5" height="12.5" fill="none" stroke="#8fb3e3" stroke-width="1"/><path d="M5 10h4M9 5v8M13 10h4.5M13 10v4M9 13.5h4" stroke="#8fb3e3" stroke-width="1"/></svg>
<svg class="a" style="left:1525.6px;top:138.4px" width="60" height="60" viewBox="-30 -30 60 60">
<circle r="15" fill="none" stroke="#a3a3a3" stroke-width="3"/>
<path d="M-19.6 -21.3L2.8 -2.6L-2.8 2.6z" fill="#8f8f8f"/><path d="M19.1 21.8L-2.9 2.5L2.9 -2.5z" fill="#8f8f8f"/><path d="M-20.1 20.9L-2.7 -2.6L2.7 2.6z" fill="#8f8f8f"/>
<g fill="#8f8f8f"><path d="M0-14L2.5 0L0 14L-2.5 0z"/><path d="M-14 0L0-2.5L14 0L0 2.5z"/></g>
<path d="M21.4 -19.6L2.6 2.8L-2.6 -2.8z" fill="#f6838b"/>
<g fill="none" stroke="#a8a8a8" stroke-width="0.9"><path d="M-23.5-22l2.5-3M-2-23.5l3 2M-25 3l2.5-2.5M23 0l3 3M-24 25l3-2.5M-2 24l3-2.5M21.5 23l3 3"/></g>
<path d="M20-24.5l3.5 3" stroke="#f6838b" stroke-width="1.2"/>
</svg>
<div class="a" style="left:1465.1px;top:693.1px;width:127px;height:63.5px;border:1px solid #6e6e6e;background:#fff"></div>
<div class="a" style="left:1467.3px;top:695px;width:73.6px;height:35.6px;background:#777"></div>
<div class="a" style="left:394.8px;top:924.1px;width:1152.5px;height:2.9px;background:#cfcfcf"></div>
<div class="a" style="left:437.2px;top:906.5px;width:9.9px;height:17.3px;background:#8f6560;color:#111;font-size:11px;line-height:18px;text-align:center">3</div>
<div class="a" style="left:863.9px;top:906.5px;width:9.9px;height:17.3px;background:#00766a;color:#fff;font-size:11px;line-height:18px;text-align:center">2</div>
<div class="a" style="left:875.1px;top:906.5px;width:8.8px;height:17.3px;background:#00766a;color:#fff;font-size:11px;line-height:18px;text-align:center">2</div>
<div class="a" style="left:885.1px;top:906.5px;width:10.0px;height:17.3px;background:#00766a;color:#fff;font-size:11px;line-height:18px;text-align:center">2</div>
<div class="a" style="left:992.1px;top:906.5px;width:9.6px;height:17.3px;background:#00766a;color:#fff;font-size:11px;line-height:18px;text-align:center"></div>
<div class="a" style="left:1003px;top:906.5px;width:8.8px;height:17.3px;background:#00766a;color:#fff;font-size:11px;line-height:18px;text-align:center">2</div>
<div class="a" style="left:1183.7px;top:906.5px;width:10.0px;height:17.3px;background:#00766a;color:#fff;font-size:11px;line-height:18px;text-align:center">2</div>
<div class="a" style="left:1205px;top:906.5px;width:9.7px;height:17.3px;background:#00766a;color:#fff;font-size:11px;line-height:18px;text-align:center"></div>
<div class="a" style="left:1216px;top:906.5px;width:9.7px;height:17.3px;background:#00766a;color:#fff;font-size:11px;line-height:18px;text-align:center"></div>
<div class="a" style="left:1226.7px;top:906.5px;width:9.3px;height:17.3px;background:#00766a;color:#fff;font-size:11px;line-height:18px;text-align:center">2</div>
<div class="a" style="left:1269px;top:906.5px;width:10px;height:17.3px;background:#00766a;color:#fff;font-size:11px;line-height:18px;text-align:center"></div>
<div class="a" style="left:1280px;top:906.5px;width:9.7px;height:17.3px;background:#00766a;color:#fff;font-size:11px;line-height:18px;text-align:center">9</div>
<div class="a" style="left:1290.7px;top:906.5px;width:9.3px;height:17.3px;background:#00766a;color:#fff;font-size:11px;line-height:18px;text-align:center">4</div>
<div class="a" style="left:1301px;top:906.5px;width:10px;height:17.3px;background:#00766a;color:#fff;font-size:11px;line-height:18px;text-align:center"></div>
<div class="a" style="left:1312px;top:906.5px;width:9.7px;height:17.3px;background:#00766a;color:#fff;font-size:11px;line-height:18px;text-align:center"></div>
<div class="a" style="left:1333px;top:906.5px;width:10px;height:17.3px;background:#00766a;color:#fff;font-size:11px;line-height:18px;text-align:center">2</div>
<div class="a" style="left:1344px;top:906.5px;width:9.7px;height:17.3px;background:#00766a;color:#fff;font-size:11px;line-height:18px;text-align:center"></div>
<div class="a" style="left:1365px;top:906.5px;width:9.7px;height:17.3px;background:#00766a;color:#fff;font-size:11px;line-height:18px;text-align:center">2</div>
<div class="a" style="left:1375.6px;top:906.5px;width:10.0px;height:17.3px;background:#00766a;color:#fff;font-size:11px;line-height:18px;text-align:center">2</div>
<div class="a" style="left:1397px;top:906.5px;width:10px;height:17.3px;background:#00766a;color:#fff;font-size:11px;line-height:18px;text-align:center">2</div>
<div class="a" style="left:1419px;top:906.5px;width:9px;height:17.3px;background:#00766a;color:#fff;font-size:11px;line-height:18px;text-align:center"></div>
<div class="a" style="left:1450.8px;top:906.5px;width:9.2px;height:17.3px;background:#00766a;color:#fff;font-size:11px;line-height:18px;text-align:center">3</div>
<div class="a" style="left:1461px;top:906.5px;width:10px;height:17.3px;background:#00766a;color:#fff;font-size:11px;line-height:18px;text-align:center">6</div>
<div class="a" style="left:1493px;top:906.5px;width:10px;height:17.3px;background:#00766a;color:#fff;font-size:11px;line-height:18px;text-align:center"></div>
<div class="a" style="left:1535.8px;top:906.5px;width:9.8px;height:17.3px;background:#00766a;color:#fff;font-size:11px;line-height:18px;text-align:center">3</div>
<svg class="a" style="left:363px;top:915px;" width="16" height="16" viewBox="0 0 16 16"><path d="M1 8.2L7.5 1.8V14.6z M7.5 8.2L14 1.8V14.6z" fill="#fff"/></svg>
<svg class="a" style="left:1565px;top:888px;" width="16" height="17" viewBox="0 0 16 17"><path d="M1 1.6L11 8.5L1 15.4z" fill="#fff"/><rect x="11.3" y="1.6" width="2.6" height="13.8" fill="#fff"/></svg>
<svg class="a" style="left:1565px;top:918px;" width="16" height="16" viewBox="0 0 16 16"><path d="M1 1.5L7.2 7.8L1 14.1z M7.2 1.5L13.5 7.8L7.2 14.1z" fill="#fff"/></svg>
<div class="a" style="left:371.9px;top:936.28px;font-size:13.5px;line-height:16.88px;color:#fff;font-weight:400;">04:46 EST</div>
<div class="a" style="left:371.9px;top:951.36px;font-size:12.6px;line-height:15.75px;color:#fff;font-weight:400;">2023/12/13</div>
<div class="a" style="left:1471.2px;top:941px;width:100px;text-align:right;font-size:13.5px;line-height:16px;color:#fff">10:46 EST</div>
<div class="a" style="left:1471.2px;top:957.3px;width:100px;text-align:right;font-size:12.6px;line-height:15px;color:#fff">2023/12/13</div>
<div class="a" style="left:1555.5px;top:785.58px;font-size:13.5px;line-height:16.88px;color:#2a6fcf;font-weight:400;">#</div>
<svg class="a" style="left:1570px;top:784px;" width="18" height="15" viewBox="0 0 18 15"><path d="M5 2H2.2a1.2 1.2 0 0 0-1.2 1.2v8.6A1.2 1.2 0 0 0 2.2 13h13.6a1.2 1.2 0 0 0 1.2-1.2V3.2A1.2 1.2 0 0 0 15.8 2H13" fill="none" stroke="#555" stroke-width="1.3"/><path d="M7.3 3h3.4v4.3h2.4L9 11.5L4.9 7.3h2.4z" fill="#555"/></svg>
<svg class="a" style="left:876px;top:955px;" width="17" height="17" viewBox="0 0 17 17"><g fill="none" stroke="#fff" stroke-width="1"><rect x="5.6" y="1" width="5.8" height="14.5"/><rect x="1.5" y="5" width="4.1" height="10"/><rect x="11.4" y="5" width="4.1" height="10"/><path d="M7.5 3v11M9.5 3v11"/></g></svg>
<svg class="a" style="left:916px;top:955px;" width="22" height="15" viewBox="0 0 22 15"><g fill="#fff"><rect x="1" y="1" width="5.5" height="2"/><rect x="8" y="1" width="11.5" height="2"/><rect x="1" y="4.5" width="5.5" height="2"/><rect x="8" y="4.5" width="11.5" height="2"/><rect x="1" y="8" width="5.5" height="2"/><rect x="8" y="8" width="11.5" height="2"/><rect x="1" y="11.6" width="5.5" height="2"/><rect x="8" y="11.6" width="11.5" height="2"/></g></svg>
<svg class="a" style="left:961px;top:952px;" width="17" height="18" viewBox="0 0 17 18"><rect x="1.3" y="2.5" width="13.6" height="13.6" fill="none" stroke="#fff" stroke-width="1.2"/><rect x="1.3" y="2.5" width="13.6" height="3" fill="#fff"/><g fill="#fff"><rect x="6" y="8" width="1.6" height="1.6"/><rect x="9" y="8" width="1.6" height="1.6"/><rect x="12" y="8" width="1.6" height="1.6"/><rect x="3" y="11" width="1.6" height="1.6"/><rect x="6" y="11" width="1.6" height="1.6"/><rect x="9" y="11" width="1.6" height="1.6"/><rect x="12" y="11" width="1.6" height="1.6"/><rect x="3" y="13.5" width="1.6" height="1.2"/><rect x="6" y="13.5" width="1.6" height="1.2"/></g></svg>
<svg class="a" style="left:1002px;top:951px;" width="22" height="21" viewBox="0 0 22 21"><g fill="none" stroke="#fff" stroke-width="1.3"><circle cx="2.8" cy="2.6" r="1.5"/><circle cx="10.2" cy="2.6" r="1.5"/><circle cx="18" cy="2.6" r="1.5"/><circle cx="6.8" cy="17.2" r="1.5"/><circle cx="14" cy="17.2" r="1.5"/><path d="M2.8 4.1v5.3M10.2 4.1v5.3M18 4.1v5.3M1 9.4h19M6.8 9.4v6.3M14 9.4v6.3"/></g></svg>
<svg class="a" style="left:1046px;top:950px;" width="22" height="22" viewBox="0 0 22 22"><circle cx="8.4" cy="8.3" r="6.2" fill="none" stroke="#fff" stroke-width="2"/><path d="M8.4 5v6.6M5.1 8.3h6.6" stroke="#fff" stroke-width="2"/><path d="M12.8 12.7l6.4 6.3" stroke="#fff" stroke-width="2.6"/></svg>
<div class="a" style="left:1052.3px;top:969.44px;font-size:8.5px;line-height:10.62px;color:#fff;font-weight:400;">6h</div>
<div class="a" style="left:685.8px;top:800.2px;width:365.2px;height:94.8px;background:#fff;border-radius:7px;box-shadow:0 1px 6px rgba(0,0,0,.35)"></div>
<svg class="a" style="left:857px;top:894px;" width="24" height="12" viewBox="0 0 24 12"><path d="M1.5 0.5H22.5L12 11z" fill="#fff"/></svg>
<div class="a" style="left:688.1px;top:801.9px;width:361px;height:44px;background:#f4f4f4;border-radius:5px;border-bottom:1px solid #e2e2e2"></div>
<svg class="a" style="left:693.5px;top:807px;" width="24" height="16" viewBox="0 0 24 16"><rect x="0.5" y="1" width="15" height="13.8" rx="1.5" fill="#00766a"/><path d="M15 7.9L22.3 2.3V13.5z" fill="#00766a"/></svg>
<div class="a" style="left:719.9px;top:804.82px;font-size:14.5px;line-height:18.12px;color:#222;font-weight:400;">Demo ...</div>
<div class="a" style="left:719.9px;top:826.06px;font-size:12.8px;line-height:16.0px;color:#222;font-weight:400;">Video Motion</div>
<svg class="a" style="left:830px;top:804px;" width="16" height="17" viewBox="0 0 16 17"><path d="M7.5 0.8H14L9.8 6H13.8L3 16.2L6.3 8.6H2.3z" fill="#222"/></svg>
<svg class="a" style="left:850px;top:807px;" width="18" height="12" viewBox="0 0 18 12"><rect x="1" y="1.6" width="10.5" height="9.5" rx="1.2" fill="#0d4fc0"/><path d="M11 6.4L16.3 2V10.8z" fill="#0d4fc0"/></svg>
<svg class="a" style="left:870.5px;top:806.5px;" width="18" height="12" viewBox="0 0 18 12"><rect x="1.2" y="1.5" width="10.6" height="8.6" rx="1" fill="none" stroke="#1f6fd0" stroke-width="1.2"/><path d="M11.8 5.8L15.9 2.3V9.3z" fill="none" stroke="#1f6fd0" stroke-width="1.2"/></svg>
<svg class="a" style="left:890.5px;top:805.5px;" width="17" height="17" viewBox="0 0 17 17"><g fill="#ddd" stroke="#444" stroke-width="0.8"><rect x="1" y="7" width="4" height="8.5"/><rect x="11.5" y="7" width="4" height="8.5"/><rect x="4.8" y="1" width="6.8" height="14.5"/></g><path d="M6.5 3v11M8.2 3v11M9.9 3v11M5 4h6.5M5 6h6.5M5 8h6.5M5 10h6.5M5 12h6.5" stroke="#777" stroke-width="0.5"/><rect x="7" y="13.5" width="2.5" height="2" fill="#333"/></svg>
<svg class="a" style="left:911px;top:805.5px;" width="17" height="17" viewBox="0 0 17 17"><circle cx="8.2" cy="8.2" r="6.6" fill="none" stroke="#222" stroke-width="1.3"/><path d="M8.8 3.8L7.4 9.3" stroke="#222" stroke-width="1.2"/></svg>
<div class="a" style="left:932.3px;top:806.2px;width:52.9px;height:12.8px;background:#fff;border-radius:6.4px"></div>
<div class="a" style="left:945.4px;top:806.35px;font-size:12.3px;line-height:15.38px;color:#ee0000;font-weight:700;">High</div>
<svg class="a" style="left:1028px;top:806px;" width="15" height="15" viewBox="0 0 15 15"><path d="M7.3 1.2v12.6M1 7.5h12.6" stroke="#222" stroke-width="2.6"/></svg>
<div class="a" style="left:688.1px;top:848.4px;width:361px;height:42.7px;background:#f4f4f4;border-radius:5px;border-bottom:1px solid #e2e2e2"></div>
<svg class="a" style="left:693.5px;top:853.5px;" width="24" height="16" viewBox="0 0 24 16"><rect x="0.5" y="1" width="15" height="13.8" rx="1.5" fill="#00766a"/><path d="M15 7.9L22.3 2.3V13.5z" fill="#00766a"/></svg>
<div class="a" style="left:719.9px;top:851.32px;font-size:14.5px;line-height:18.12px;color:#222;font-weight:400;">HQ - ...</div>
<div class="a" style="left:719.9px;top:872.56px;font-size:12.8px;line-height:16.0px;color:#222;font-weight:400;">Video Motion</div>
<svg class="a" style="left:830px;top:850.5px;" width="16" height="17" viewBox="0 0 16 17"><path d="M7.5 0.8H14L9.8 6H13.8L3 16.2L6.3 8.6H2.3z" fill="#222"/></svg>
<svg class="a" style="left:850px;top:853.5px;" width="18" height="12" viewBox="0 0 18 12"><rect x="1" y="1.6" width="10.5" height="9.5" rx="1.2" fill="#0d4fc0"/><path d="M11 6.4L16.3 2V10.8z" fill="#0d4fc0"/></svg>
<svg class="a" style="left:870.5px;top:853.0px;" width="18" height="12" viewBox="0 0 18 12"><rect x="1.2" y="1.5" width="10.6" height="8.6" rx="1" fill="none" stroke="#1f6fd0" stroke-width="1.2"/><path d="M11.8 5.8L15.9 2.3V9.3z" fill="none" stroke="#1f6fd0" stroke-width="1.2"/></svg>
<svg class="a" style="left:890.5px;top:852.0px;" width="17" height="17" viewBox="0 0 17 17"><g fill="#ddd" stroke="#444" stroke-width="0.8"><rect x="1" y="7" width="4" height="8.5"/><rect x="11.5" y="7" width="4" height="8.5"/><rect x="4.8" y="1" width="6.8" height="14.5"/></g><path d="M6.5 3v11M8.2 3v11M9.9 3v11M5 4h6.5M5 6h6.5M5 8h6.5M5 10h6.5M5 12h6.5" stroke="#777" stroke-width="0.5"/><rect x="7" y="13.5" width="2.5" height="2" fill="#333"/></svg>
<svg class="a" style="left:911px;top:852.0px;" width="17" height="17" viewBox="0 0 17 17"><circle cx="8.2" cy="8.2" r="6.6" fill="none" stroke="#222" stroke-width="1.3"/><path d="M8.8 3.8L7.4 9.3" stroke="#222" stroke-width="1.2"/></svg>
<div class="a" style="left:932.3px;top:852.7px;width:52.9px;height:12.8px;background:#fff;border-radius:6.4px"></div>
<div class="a" style="left:945.4px;top:852.85px;font-size:12.3px;line-height:15.38px;color:#ee0000;font-weight:700;">High</div>
<svg class="a" style="left:1028px;top:852.5px;" width="15" height="15" viewBox="0 0 15 15"><path d="M7.3 1.2v12.6M1 7.5h12.6" stroke="#222" stroke-width="2.6"/></svg>
<div class="a" style="left:1618.3px;top:135px;width:108px;height:2.3px;background:#2a66c8;border-bottom:0.8px solid #8a8a8a"></div>
<div class="a" style="left:1846.2px;top:135px;width:79px;height:2.3px;background:#2a66c8;border-bottom:0.8px solid #8a8a8a"></div>
<div class="a" style="left:1925px;top:135px;width:109px;height:2.3px;background:#6b6b6b"></div>
<div class="a" style="left:1726px;top:135.6px;width:4.5px;height:1.6px;background:#9a9a9a"></div>
<div class="a" style="left:1841.8px;top:135.6px;width:4.5px;height:1.6px;background:#9a9a9a"></div>
<svg class="a" style="left:1630px;top:110px;" width="15" height="22" viewBox="0 0 15 22"><rect x="0.2" y="0" width="14.6" height="21.4" rx="3" fill="#1157c7"/><g stroke="#fff" stroke-width="0.8" fill="none"><path d="M4 3.5v12M6 3.5v12M8 3.5v12M10 3.5v12M3.5 4h7M1 9h13M1 12h13"/><rect x="4.5" y="15.8" width="6" height="2.6"/></g></svg>
<div class="a" style="left:1649px;top:110.83px;font-size:15px;line-height:18.75px;color:#222;font-weight:400;">Alarms</div>
<svg class="a" style="left:1699px;top:114px;" width="12" height="11" viewBox="0 0 12 11"><path d="M0.8 3.5h2.4L6.4 0.8v9.8L3.2 7.9H0.8z" fill="#222"/><path d="M8 3a3.2 3.2 0 0 1 0 5.4M9.5 1.6a5.2 5.2 0 0 1 0 8.2" fill="none" stroke="#222" stroke-width="1.1"/></svg>
<div class="a" style="left:1730.2px;top:101.1px;width:111.7px;height:35.2px;background:#0051be;border-radius:5px 5px 0 0"></div>
<div class="a" style="left:1741.8px;top:110.83px;font-size:15px;line-height:18.75px;color:#fff;font-weight:400;">Events</div>
<div class="a" style="left:1790.7px;top:110px;width:21.3px;height:19.2px;background:#7a7a7a;border-radius:50%"></div>
<div class="a" style="left:1790.7px;top:110px;width:21.3px;height:19.2px;font-size:14px;line-height:20px;text-align:center;color:#fff;font-weight:700">2</div>
<svg class="a" style="left:1815px;top:110px;" width="17" height="17" viewBox="0 0 17 17"><circle cx="8.6" cy="8.3" r="6.5" fill="none" stroke="#fff" stroke-width="1.6"/><path d="M6 5.7l5.2 5.2M11.2 5.7L6 10.9" stroke="#fff" stroke-width="1.8"/></svg>
<div class="a" style="left:1857.3px;top:110.83px;font-size:15px;line-height:18.75px;color:#222;font-weight:400;">Devices</div>
<svg class="a" style="left:2016px;top:109px;" width="17" height="18" viewBox="0 0 17 18"><path d="M7 2.2H3a1.5 1.5 0 0 0-1.5 1.5v10a1.5 1.5 0 0 0 1.5 1.5h4" fill="none" stroke="#666" stroke-width="1.4"/><path d="M5.5 7.4h4.3V4.7l4.8 4.2-4.8 4.2v-2.7H5.5z" fill="#555"/></svg>
<div class="a" style="left:1618px;top:148px;width:416px;height:333.5px;border:1px solid #e6eef6;border-radius:7px;background:#fff"></div>
<div class="a" style="left:1620px;top:150.2px;width:412px;height:36.1px;background:#00766a;border-radius:7px 7px 0 0"></div>
<div class="a" style="left:1628.4px;top:159.93px;font-size:15px;line-height:18.75px;color:#fff;font-weight:400;">2023/12/13 07:18:01 EST</div>
<svg class="a" style="left:1998px;top:160px;" width="15" height="15" viewBox="0 0 15 15"><path d="M5 2.2V1h5v1.2" fill="none" stroke="#9fd0c8" stroke-width="1.2"/><rect x="1" y="2.5" width="13" height="1.7" fill="#9fd0c8"/><path d="M2.2 4.8h10.6l-0.7 9.4H2.9z" fill="#9fd0c8"/><path d="M5 6.2v6.5M7.5 6.2v6.5M10 6.2v6.5" stroke="#00766a" stroke-width="0.9"/></svg>
<div class="a" style="left:1620px;top:187px;width:412px;height:266px;background:#ff0000"></div>
<div class="a" style="left:1621.7px;top:188.3px;width:408.6px;height:23.5px;background:#000"></div>
<svg class="a" style="left:1621.7px;top:211.8px" width="408" height="239" viewBox="0 0 408 239">
<defs>
<radialGradient id="lw1" cx="0.6" cy="0.3" r="0.85"><stop offset="0" stop-color="#ffffff"/><stop offset="0.55" stop-color="#eeeeec"/><stop offset="1" stop-color="#c9cbca"/></radialGradient>
<linearGradient id="cp1" x1="0" y1="0" x2="0" y2="1"><stop offset="0" stop-color="#646e74"/><stop offset="0.45" stop-color="#525d64"/><stop offset="1" stop-color="#343c41"/></linearGradient>
<linearGradient id="gw1" x1="0" y1="0" x2="1" y2="1"><stop offset="0" stop-color="#bdc0c1"/><stop offset="1" stop-color="#858a8d"/></linearGradient>
<linearGradient id="bt1" x1="0" y1="0" x2="0" y2="1"><stop offset="0" stop-color="#000" stop-opacity="0"/><stop offset="0.55" stop-color="#000" stop-opacity="0.75"/><stop offset="1" stop-color="#000" stop-opacity="0.95"/></linearGradient>
<filter id="nz1" x="0" y="0" width="100%" height="100%"><feTurbulence type="fractalNoise" baseFrequency="0.9" numOctaves="2" seed="7"/><feColorMatrix type="matrix" values="0 0 0 0 0.45  0 0 0 0 0.55  0 0 0 0 0.62  0 0 0 1.6 -0.55"/></filter>
</defs>
<rect width="408" height="239" fill="url(#cp1)"/>
<rect width="408" height="239" filter="url(#nz1)" opacity="0.55"/>
<path d="M0 0 H124 L124 26 L24 154 L0 170 Z" fill="url(#lw1)"/>
<path d="M0 116 L23 154 L24 166 L0 176 Z" fill="#3b2a22"/>
<path d="M124 0 H190 L186 23 L124 26 Z" fill="#d9d6cc"/>
<path d="M144 0 H177 V20 H144 Z" fill="#9b6a3a"/>
<path d="M184 0 H317 L308.8 83.7 L268 162.5 L261 170.7 L254.5 124.5 L251.7 92 L186.5 21.2 Z" fill="#e4e2d8"/>
<path d="M96.8 0 H124 V26 L122.7 26.6 L96.8 50 Z" fill="#d6d6d2" opacity="0.8"/>
<path d="M216 0 H227 L225 48 L218 46 Z" fill="#4a3526"/>
<path d="M251 11 H271 L258 90 L249 88 Z" fill="#2a2420"/>
<path d="M317 0 H408 V100 L308.8 83.7 Z" fill="url(#gw1)"/>
<path d="M330 0 H408 V22 L330 6 Z" fill="#6d7880" opacity="0.45"/>
<path d="M308.8 83.7 L408 100 V239 H257 L261 170.7 L268 162.5 Z" fill="#1c1d1f"/>
<path d="M308.8 83.7 L408 100 V145 L300 140 L268 162.5 Z" fill="#474b4f"/>
<path d="M287 141 H333 V168 H287 Z" fill="#0c0c0c"/>
<path d="M281.6 239 L319.7 165.2 L336 168 L328 239 Z" fill="#bdb7ab"/>
<path d="M0 0 H50 L0 12 Z" fill="#5a6068" opacity="0.8"/>
<path d="M102 53 L121 58 L124 84 L112 93 L104 88 Z" fill="#8a2c35"/>
<path d="M96 50 L118 53 L121 58 L102 58 Z" fill="#d8d2cc"/>
<path d="M73 87 L90 86 L92 106 L76 108 Z" fill="#e8e8ec"/>
<ellipse cx="86" cy="55" rx="6.5" ry="7" fill="#c9a58e"/>
<path d="M77 61 Q86 56 100 60 L116 70 L118 92 L106 96 L96 92 L80 90 Z" fill="#7a1a22"/>
<path d="M94 91 L113 93 L116 133 L108 137 L102 112 L97 96 Z" fill="#1c1e26"/>
<path d="M60 170 Q90 140 112 136 L118 150 Q95 175 70 180 Z" fill="#2e3538" opacity="0.7"/>
<rect y="170" width="408" height="69" fill="url(#bt1)"/>
<rect x="0" y="234" width="408" height="5" fill="#2c3236" opacity="0.7"/>
<rect x="200" y="201" width="128" height="24" fill="#000" opacity="0.35"/>
<rect x="38" y="172" width="335" height="2" fill="#aaa" opacity="0.25"/>
</svg>
<svg class="a" style="left:1624px;top:196px;" width="19" height="12" viewBox="0 0 19 12"><rect x="1.5" y="1.3" width="10.5" height="9.5" rx="1" fill="#ff1a1a"/><path d="M11.5 6L17.2 1.6V10.4z" fill="#ff1a1a"/></svg>
<div class="a" style="left:1645.5px;top:192.13px;font-size:15px;line-height:18.75px;color:#dddddd;font-weight:400;">Demo 125 High St. - HQ - ...</div>
<svg class="a" style="left:1882px;top:193px;" width="17" height="14" viewBox="0 0 17 14"><path d="M1 3h15M1 7h15M1 11h15" stroke="#e6e6e6" stroke-width="1.3"/><rect x="9.5" y="1.3" width="2.5" height="3.4" fill="#e6e6e6"/><rect x="4" y="5.3" width="2.5" height="3.4" fill="#e6e6e6"/><rect x="10.5" y="9.3" width="2.5" height="3.4" fill="#e6e6e6"/></svg>
<svg class="a" style="left:1918px;top:191px;" width="17" height="17" viewBox="0 0 17 17"><path d="M3.4 5.8A6 6 0 1 1 2.6 10" fill="none" stroke="#e6e6e6" stroke-width="1.7"/><path d="M1 3.5L5.8 4.9L2.4 8.4z" fill="#e6e6e6"/></svg>
<svg class="a" style="left:1954px;top:191px;" width="16" height="16" viewBox="0 0 16 16"><circle cx="7.8" cy="7.8" r="6.6" fill="#e6e6e6"/><circle cx="7.8" cy="4.4" r="1.3" fill="#000"/><path d="M5.9 6.5h2.9v4.6h1.3v1.4H5.7v-1.4h1.2V7.9h-1z" fill="#000"/></svg>
<svg class="a" style="left:1988px;top:190px;" width="17" height="17" viewBox="0 0 17 17"><path d="M3 13.5l4.3-4.3M9.7 7.3L14 3" stroke="#e6e6e6" stroke-width="1.9"/><path d="M1.3 10V15.6H6.9z M10 1.3H15.6V6.9z" fill="#e6e6e6"/></svg>
<svg class="a" style="left:1633px;top:414px;" width="18" height="18" viewBox="0 0 18 18"><circle cx="9" cy="9" r="7" fill="none" stroke="#fff" stroke-width="1.5"/><path d="M7.5 5.5l3.5 3.5-3.5 3.5" fill="none" stroke="#fff" stroke-width="2"/></svg>
<svg class="a" style="left:1659px;top:420px;" width="22" height="15" viewBox="0 0 22 15"><g fill="#fff"><rect x="1" y="1" width="5" height="1.9"/><rect x="7.5" y="1" width="12" height="1.9"/><rect x="1" y="4.6" width="5" height="1.9"/><rect x="7.5" y="4.6" width="12" height="1.9"/><rect x="1" y="8.2" width="5" height="1.9"/><rect x="7.5" y="8.2" width="12" height="1.9"/><rect x="1" y="11.8" width="5" height="1.9"/><rect x="7.5" y="11.8" width="12" height="1.9"/></g></svg>
<svg class="a" style="left:1704px;top:417px;" width="16" height="18" viewBox="0 0 16 18"><rect x="1" y="2" width="14" height="14" fill="none" stroke="#fff" stroke-width="1.2"/><rect x="1" y="2" width="14" height="3.2" fill="#fff"/><g fill="#fff"><rect x="5" y="7.5" width="2" height="1.8"/><rect x="8" y="7.5" width="2" height="1.8"/><rect x="11" y="7.5" width="2" height="1.8"/><rect x="3" y="10.5" width="2" height="1.8"/><rect x="6" y="10.5" width="2" height="1.8"/><rect x="9" y="10.5" width="2" height="1.8"/><rect x="12" y="10.5" width="2" height="1.8"/><rect x="3" y="13" width="2" height="1.5"/><rect x="6" y="13" width="2" height="1.5"/></g></svg>
<svg class="a" style="left:1744px;top:416px;" width="22" height="21" viewBox="0 0 22 21"><g fill="none" stroke="#fff" stroke-width="1.3"><circle cx="2.8" cy="2.6" r="1.5"/><circle cx="10.5" cy="2.6" r="1.5"/><circle cx="18.3" cy="2.6" r="1.5"/><circle cx="7" cy="17.4" r="1.5"/><circle cx="14.3" cy="17.4" r="1.5"/><path d="M2.8 4.1v5.3M10.5 4.1v5.3M18.3 4.1v5.3M1 9.4h19.5M7 9.4v6.5M14.3 9.4v6.5"/></g></svg>
<svg class="a" style="left:1789px;top:415px;" width="22" height="22" viewBox="0 0 22 22"><circle cx="8" cy="8.4" r="6" fill="none" stroke="#fff" stroke-width="2"/><path d="M8 5.2v6.4M4.8 8.4h6.4" stroke="#fff" stroke-width="2"/><path d="M12.3 12.7l6.5 6.3" stroke="#fff" stroke-width="2.6"/></svg>
<div class="a" style="left:1794.8px;top:434.07px;font-size:9.5px;line-height:11.88px;color:#fff;font-weight:400;">1h</div>
<svg class="a" style="left:1834px;top:415px;" width="16" height="16" viewBox="0 0 16 16"><path d="M4 3.6A6.4 6.4 0 1 1 1.7 9" fill="none" stroke="#fff" stroke-width="1.1"/><path d="M1.5 2.5L5.5 2.8L3.5 6z" fill="#fff"/></svg>
<div class="a" style="left:1839.6px;top:419.41px;font-size:7.5px;line-height:9.38px;color:#fff;font-weight:400;">5</div>
<div class="a" style="left:1860px;top:426.8px;width:0;height:0;border-left:4.5px solid transparent;border-right:4.5px solid transparent;border-bottom:4px solid #fff"></div>
<svg class="a" style="left:1888px;top:414px;" width="13" height="14" viewBox="0 0 13 14"><path d="M12 0.5V13.5L0.7 7z" fill="#fff"/></svg>
<div class="a" style="left:1903px;top:413.90px;font-size:14px;line-height:17.5px;color:#fff;font-weight:400;">1x</div>
<div class="a" style="left:1928.6px;top:426.8px;width:0;height:0;border-left:4.3px solid transparent;border-right:4.3px solid transparent;border-bottom:4px solid #fff"></div>
<div class="a" style="left:1962px;top:419.6px;width:2.6px;height:13.7px;background:#fff"></div>
<div class="a" style="left:1966.5px;top:419.6px;width:2.6px;height:13.7px;background:#fff"></div>
<div class="a" style="left:1998.9px;top:421.3px;width:11px;height:11px;background:#0a8a0a;border-radius:50%"></div>
<svg class="a" style="left:2011px;top:349px;" width="16" height="16" viewBox="0 0 16 16"><path d="M1 1L11 7.8L1 14.6z" fill="#777" opacity="0.6"/><rect x="11.3" y="1" width="2.8" height="13.6" fill="#777" opacity="0.6"/></svg>
<svg class="a" style="left:2011px;top:380px;" width="16" height="14" viewBox="0 0 16 14"><path d="M1 0.5L7 6.5L1 12.5z M7 0.5L13 6.5L7 12.5z" fill="#777" opacity="0.6"/></svg>
<svg class="a" style="left:1626px;top:375px;" width="20" height="14" viewBox="0 0 20 14"><path d="M18 0.5L11 7L18 13.5z M11 0.5L4 7L11 13.5z" fill="#888" opacity="0.35"/></svg>
<div class="a" style="left:1656.4px;top:477.2px;width:6.6px;height:4px;background:#5f6b73"></div>
<div class="a" style="left:1618px;top:453px;width:416px;height:28px;overflow:hidden"><div class="a" style="left:53.8px;top:19.4px;font-size:15px;line-height:18px;color:#5f6b73">2023/12/13</div></div>
<div class="a" style="left:1618px;top:493.9px;width:416px;height:333.5px;border:1px solid #e6eef6;border-radius:7px;background:#fff"></div>
<div class="a" style="left:1620px;top:496.09999999999997px;width:412px;height:36.1px;background:#00766a;border-radius:7px 7px 0 0"></div>
<div class="a" style="left:1628.4px;top:505.83px;font-size:15px;line-height:18.75px;color:#fff;font-weight:400;">2023/12/13 07:17:36 EST</div>
<svg class="a" style="left:1998px;top:505.9px;" width="15" height="15" viewBox="0 0 15 15"><path d="M5 2.2V1h5v1.2" fill="none" stroke="#9fd0c8" stroke-width="1.2"/><rect x="1" y="2.5" width="13" height="1.7" fill="#9fd0c8"/><path d="M2.2 4.8h10.6l-0.7 9.4H2.9z" fill="#9fd0c8"/><path d="M5 6.2v6.5M7.5 6.2v6.5M10 6.2v6.5" stroke="#00766a" stroke-width="0.9"/></svg>
<div class="a" style="left:1620px;top:532.9px;width:412px;height:266px;background:#ff0000"></div>
<div class="a" style="left:1621.7px;top:534.2px;width:408.6px;height:23.5px;background:#000"></div>
<svg class="a" style="left:1621.7px;top:557.7px" width="408" height="239" viewBox="0 0 408 239">
<defs>
<radialGradient id="lw2" cx="0.6" cy="0.3" r="0.85"><stop offset="0" stop-color="#ffffff"/><stop offset="0.55" stop-color="#eeeeec"/><stop offset="1" stop-color="#c9cbca"/></radialGradient>
<linearGradient id="cp2" x1="0" y1="0" x2="0" y2="1"><stop offset="0" stop-color="#646e74"/><stop offset="0.45" stop-color="#525d64"/><stop offset="1" stop-color="#343c41"/></linearGradient>
<linearGradient id="gw2" x1="0" y1="0" x2="1" y2="1"><stop offset="0" stop-color="#bdc0c1"/><stop offset="1" stop-color="#858a8d"/></linearGradient>
<linearGradient id="bt2" x1="0" y1="0" x2="0" y2="1"><stop offset="0" stop-color="#000" stop-opacity="0"/><stop offset="0.55" stop-color="#000" stop-opacity="0.75"/><stop offset="1" stop-color="#000" stop-opacity="0.95"/></linearGradient>
<filter id="nz2" x="0" y="0" width="100%" height="100%"><feTurbulence type="fractalNoise" baseFrequency="0.9" numOctaves="2" seed="14"/><feColorMatrix type="matrix" values="0 0 0 0 0.45  0 0 0 0 0.55  0 0 0 0 0.62  0 0 0 1.6 -0.55"/></filter>
</defs>
<rect width="408" height="239" fill="url(#cp2)"/>
<rect width="408" height="239" filter="url(#nz2)" opacity="0.55"/>
<path d="M0 0 H124 L124 26 L24 154 L0 170 Z" fill="url(#lw2)"/>
<path d="M0 116 L23 154 L24 166 L0 176 Z" fill="#3b2a22"/>
<path d="M124 0 H190 L186 23 L124 26 Z" fill="#d9d6cc"/>
<path d="M144 0 H177 V20 H144 Z" fill="#9b6a3a"/>
<path d="M184 0 H317 L308.8 83.7 L268 162.5 L261 170.7 L254.5 124.5 L251.7 92 L186.5 21.2 Z" fill="#e4e2d8"/>
<path d="M96.8 0 H124 V26 L122.7 26.6 L96.8 50 Z" fill="#d6d6d2" opacity="0.8"/>
<path d="M216 0 H227 L225 48 L218 46 Z" fill="#4a3526"/>
<path d="M251 11 H271 L258 90 L249 88 Z" fill="#2a2420"/>
<path d="M317 0 H408 V100 L308.8 83.7 Z" fill="url(#gw2)"/>
<path d="M330 0 H408 V22 L330 6 Z" fill="#6d7880" opacity="0.45"/>
<path d="M308.8 83.7 L408 100 V239 H257 L261 170.7 L268 162.5 Z" fill="#1c1d1f"/>
<path d="M308.8 83.7 L408 100 V145 L300 140 L268 162.5 Z" fill="#474b4f"/>
<path d="M287 141 H333 V168 H287 Z" fill="#0c0c0c"/>
<path d="M281.6 239 L319.7 165.2 L336 168 L328 239 Z" fill="#bdb7ab"/>
<path d="M0 0 H50 L0 12 Z" fill="#5a6068" opacity="0.8"/>
<path d="M88 58 L118 52 L124 56 L124 84 L96 90 L88 86 Z" fill="#7a2a2a"/>
<path d="M95 48 L112 46 L118 52 L96 56 Z" fill="#e4e0dc"/>
<path d="M74 79 L94 76 L98 100 L78 105 Z" fill="#eeeef0"/>
<ellipse cx="48" cy="68" rx="6.5" ry="7" fill="#b89585"/>
<path d="M32 77 Q45 72 56 77 L76 92 L70 100 L62 95 L66 122 L48 124 L34 100 Z" fill="#6a1418"/>
<path d="M50 118 L66 120 L82 150 L86 160 L78 163 L66 145 L58 163 L50 160 L55 140 Z" fill="#23283a"/>
<path d="M20 200 Q50 160 80 160 L86 172 Q60 205 30 212 Z" fill="#2e3538" opacity="0.6"/>
<rect y="170" width="408" height="69" fill="url(#bt2)"/>
<rect x="0" y="234" width="408" height="5" fill="#2c3236" opacity="0.7"/>
<rect x="200" y="201" width="128" height="24" fill="#000" opacity="0.35"/>
<rect x="38" y="172" width="335" height="2" fill="#aaa" opacity="0.25"/>
</svg>
<svg class="a" style="left:1624px;top:541.9px;" width="19" height="12" viewBox="0 0 19 12"><rect x="1.5" y="1.3" width="10.5" height="9.5" rx="1" fill="#ff1a1a"/><path d="M11.5 6L17.2 1.6V10.4z" fill="#ff1a1a"/></svg>
<div class="a" style="left:1645.5px;top:538.03px;font-size:15px;line-height:18.75px;color:#dddddd;font-weight:400;">Demo 125 High St. - HQ - ...</div>
<svg class="a" style="left:1882px;top:538.9px;" width="17" height="14" viewBox="0 0 17 14"><path d="M1 3h15M1 7h15M1 11h15" stroke="#e6e6e6" stroke-width="1.3"/><rect x="9.5" y="1.3" width="2.5" height="3.4" fill="#e6e6e6"/><rect x="4" y="5.3" width="2.5" height="3.4" fill="#e6e6e6"/><rect x="10.5" y="9.3" width="2.5" height="3.4" fill="#e6e6e6"/></svg>
<svg class="a" style="left:1918px;top:536.9px;" width="17" height="17" viewBox="0 0 17 17"><path d="M3.4 5.8A6 6 0 1 1 2.6 10" fill="none" stroke="#e6e6e6" stroke-width="1.7"/><path d="M1 3.5L5.8 4.9L2.4 8.4z" fill="#e6e6e6"/></svg>
<svg class="a" style="left:1954px;top:536.9px;" width="16" height="16" viewBox="0 0 16 16"><circle cx="7.8" cy="7.8" r="6.6" fill="#e6e6e6"/><circle cx="7.8" cy="4.4" r="1.3" fill="#000"/><path d="M5.9 6.5h2.9v4.6h1.3v1.4H5.7v-1.4h1.2V7.9h-1z" fill="#000"/></svg>
<svg class="a" style="left:1988px;top:535.9px;" width="17" height="17" viewBox="0 0 17 17"><path d="M3 13.5l4.3-4.3M9.7 7.3L14 3" stroke="#e6e6e6" stroke-width="1.9"/><path d="M1.3 10V15.6H6.9z M10 1.3H15.6V6.9z" fill="#e6e6e6"/></svg>
<svg class="a" style="left:1633px;top:759.9px;" width="18" height="18" viewBox="0 0 18 18"><circle cx="9" cy="9" r="7" fill="none" stroke="#fff" stroke-width="1.5"/><path d="M7.5 5.5l3.5 3.5-3.5 3.5" fill="none" stroke="#fff" stroke-width="2"/></svg>
<svg class="a" style="left:1659px;top:765.9px;" width="22" height="15" viewBox="0 0 22 15"><g fill="#fff"><rect x="1" y="1" width="5" height="1.9"/><rect x="7.5" y="1" width="12" height="1.9"/><rect x="1" y="4.6" width="5" height="1.9"/><rect x="7.5" y="4.6" width="12" height="1.9"/><rect x="1" y="8.2" width="5" height="1.9"/><rect x="7.5" y="8.2" width="12" height="1.9"/><rect x="1" y="11.8" width="5" height="1.9"/><rect x="7.5" y="11.8" width="12" height="1.9"/></g></svg>
<svg class="a" style="left:1704px;top:762.9px;" width="16" height="18" viewBox="0 0 16 18"><rect x="1" y="2" width="14" height="14" fill="none" stroke="#fff" stroke-width="1.2"/><rect x="1" y="2" width="14" height="3.2" fill="#fff"/><g fill="#fff"><rect x="5" y="7.5" width="2" height="1.8"/><rect x="8" y="7.5" width="2" height="1.8"/><rect x="11" y="7.5" width="2" height="1.8"/><rect x="3" y="10.5" width="2" height="1.8"/><rect x="6" y="10.5" width="2" height="1.8"/><rect x="9" y="10.5" width="2" height="1.8"/><rect x="12" y="10.5" width="2" height="1.8"/><rect x="3" y="13" width="2" height="1.5"/><rect x="6" y="13" width="2" height="1.5"/></g></svg>
<svg class="a" style="left:1744px;top:761.9px;" width="22" height="21" viewBox="0 0 22 21"><g fill="none" stroke="#fff" stroke-width="1.3"><circle cx="2.8" cy="2.6" r="1.5"/><circle cx="10.5" cy="2.6" r="1.5"/><circle cx="18.3" cy="2.6" r="1.5"/><circle cx="7" cy="17.4" r="1.5"/><circle cx="14.3" cy="17.4" r="1.5"/><path d="M2.8 4.1v5.3M10.5 4.1v5.3M18.3 4.1v5.3M1 9.4h19.5M7 9.4v6.5M14.3 9.4v6.5"/></g></svg>
<svg class="a" style="left:1789px;top:760.9px;" width="22" height="22" viewBox="0 0 22 22"><circle cx="8" cy="8.4" r="6" fill="none" stroke="#fff" stroke-width="2"/><path d="M8 5.2v6.4M4.8 8.4h6.4" stroke="#fff" stroke-width="2"/><path d="M12.3 12.7l6.5 6.3" stroke="#fff" stroke-width="2.6"/></svg>
<div class="a" style="left:1794.8px;top:779.97px;font-size:9.5px;line-height:11.88px;color:#fff;font-weight:400;">1h</div>
<svg class="a" style="left:1834px;top:760.9px;" width="16" height="16" viewBox="0 0 16 16"><path d="M4 3.6A6.4 6.4 0 1 1 1.7 9" fill="none" stroke="#fff" stroke-width="1.1"/><path d="M1.5 2.5L5.5 2.8L3.5 6z" fill="#fff"/></svg>
<div class="a" style="left:1839.6px;top:765.31px;font-size:7.5px;line-height:9.38px;color:#fff;font-weight:400;">5</div>
<div class="a" style="left:1860px;top:772.7px;width:0;height:0;border-left:4.5px solid transparent;border-right:4.5px solid transparent;border-bottom:4px solid #fff"></div>
<svg class="a" style="left:1888px;top:759.9px;" width="13" height="14" viewBox="0 0 13 14"><path d="M12 0.5V13.5L0.7 7z" fill="#fff"/></svg>
<div class="a" style="left:1903px;top:759.80px;font-size:14px;line-height:17.5px;color:#fff;font-weight:400;">1x</div>
<div class="a" style="left:1928.6px;top:772.7px;width:0;height:0;border-left:4.3px solid transparent;border-right:4.3px solid transparent;border-bottom:4px solid #fff"></div>
<div class="a" style="left:1962px;top:765.5px;width:2.6px;height:13.7px;background:#fff"></div>
<div class="a" style="left:1966.5px;top:765.5px;width:2.6px;height:13.7px;background:#fff"></div>
<div class="a" style="left:1998.9px;top:767.2px;width:11px;height:11px;background:#0a8a0a;border-radius:50%"></div>
<svg class="a" style="left:2011px;top:694.9px;" width="16" height="16" viewBox="0 0 16 16"><path d="M1 1L11 7.8L1 14.6z" fill="#777" opacity="0.6"/><rect x="11.3" y="1" width="2.8" height="13.6" fill="#777" opacity="0.6"/></svg>
<svg class="a" style="left:2011px;top:725.9px;" width="16" height="14" viewBox="0 0 16 14"><path d="M1 0.5L7 6.5L1 12.5z M7 0.5L13 6.5L7 12.5z" fill="#777" opacity="0.6"/></svg>
<svg class="a" style="left:1626px;top:720.9px;" width="20" height="14" viewBox="0 0 20 14"><path d="M18 0.5L11 7L18 13.5z M11 0.5L4 7L11 13.5z" fill="#888" opacity="0.35"/></svg>
<div class="a" style="left:1656.4px;top:823.0999999999999px;width:6.6px;height:4px;background:#5f6b73"></div>
<div class="a" style="left:1618px;top:798.9px;width:416px;height:28px;overflow:hidden"><div class="a" style="left:53.8px;top:19.4px;font-size:15px;line-height:18px;color:#5f6b73">2023/12/13</div></div>
</body></html>
